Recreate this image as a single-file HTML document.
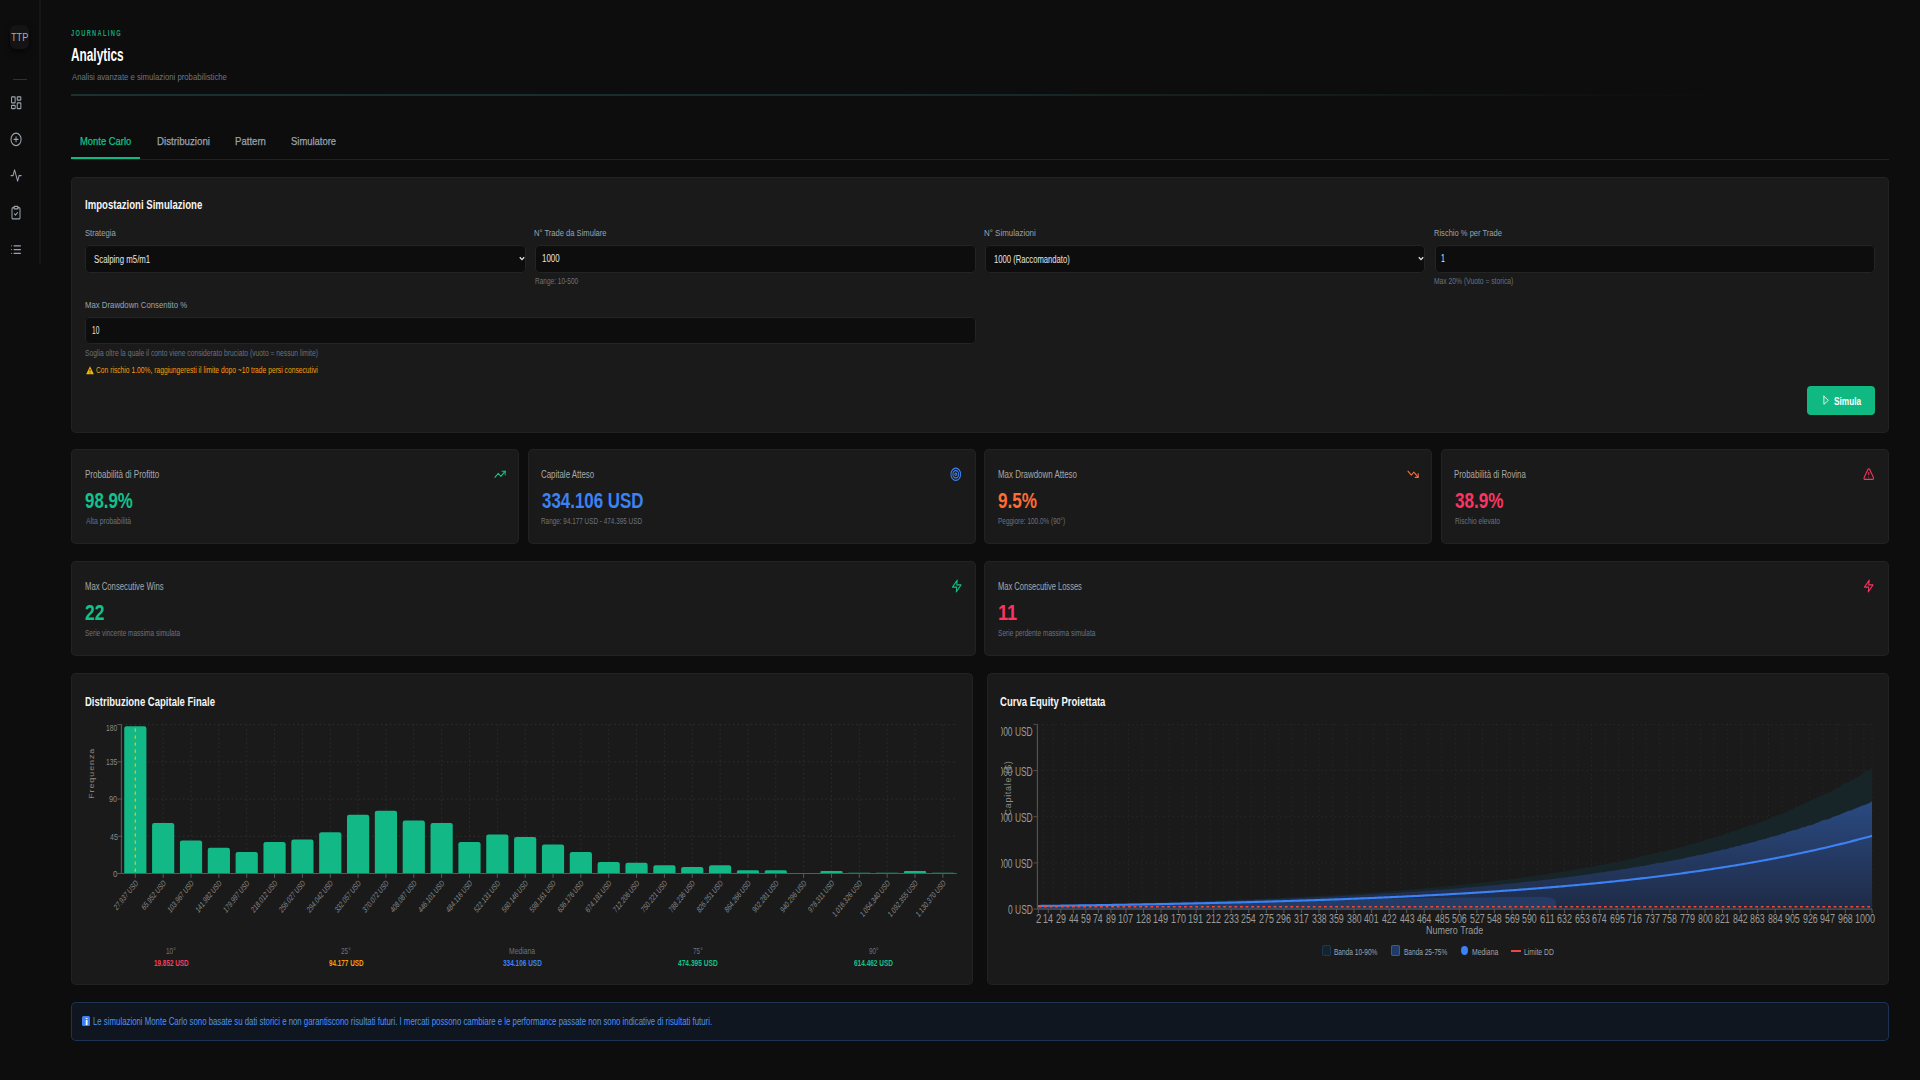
<!DOCTYPE html><html lang="it"><head><meta charset="utf-8"><title>Analytics</title><style>
*{box-sizing:border-box}
html,body{margin:0;padding:0;background:#0d0d0d;width:1920px;height:1080px;overflow:hidden}
body{position:relative;font-family:"Liberation Sans",sans-serif}
.t{position:absolute;white-space:nowrap;transform-origin:0 0;line-height:normal;font-family:"Liberation Sans",sans-serif}
.b{position:absolute}
.i{position:absolute;overflow:visible}
svg text{font-family:"Liberation Sans",sans-serif}

</style></head><body>
<div class="b" style="left:39px;top:0px;width:2px;height:263.5px;background:#151717;border-radius:0 0 1px 1px"></div>
<div class="b" style="left:10px;top:25px;width:19px;height:24px;background:#141414;border-radius:6px;box-shadow:0 3px 6px rgba(0,0,0,.6)"></div>
<div class="t" style="left:10.92px;top:29.9px;font-size:11.8px;color:#a9a9a9;transform:scaleX(0.7798)">TTP</div>
<div class="b" style="left:13px;top:78.8px;width:13.5px;height:1.4px;background:#1c3a3a"></div>
<svg class="i" style="left:9.7px;top:94.55px" width="12.4" height="15.6" viewBox="0 0 24 24" preserveAspectRatio="none" fill="none" stroke="#9ca3af" stroke-width="2" stroke-linecap="round" stroke-linejoin="round"><rect width="7" height="9" x="3" y="3" rx="1"/><rect width="7" height="5" x="14" y="3" rx="1"/><rect width="7" height="9" x="14" y="12" rx="1"/><rect width="7" height="5" x="3" y="16" rx="1"/></svg>
<svg class="i" style="left:9.5px;top:131.9px" width="12.1" height="14.8" viewBox="0 0 24 24" preserveAspectRatio="none" fill="none" stroke="#9ca3af" stroke-width="2" stroke-linecap="round" stroke-linejoin="round"><circle cx="12" cy="12" r="10"/><path d="M8 12h8M12 8v8"/></svg>
<svg class="i" style="left:9.5px;top:168.3px" width="12.2" height="15" viewBox="0 0 24 24" preserveAspectRatio="none" fill="none" stroke="#9ca3af" stroke-width="2" stroke-linecap="round" stroke-linejoin="round"><path d="M22 12h-4l-3 9L9 3l-3 9H2"/></svg>
<svg class="i" style="left:9.5px;top:205.1px" width="12" height="15.2" viewBox="0 0 24 24" preserveAspectRatio="none" fill="none" stroke="#9ca3af" stroke-width="2" stroke-linecap="round" stroke-linejoin="round"><rect width="8" height="4" x="8" y="2" rx="1" ry="1"/><path d="M16 4h2a2 2 0 0 1 2 2v14a2 2 0 0 1-2 2H6a2 2 0 0 1-2-2V6a2 2 0 0 1 2-2h2"/><path d="m9 14 2 2 4-4"/></svg>
<svg class="i" style="left:9.5px;top:241.9px" width="12" height="15" viewBox="0 0 24 24" preserveAspectRatio="none" fill="none" stroke="#9ca3af" stroke-width="2" stroke-linecap="round" stroke-linejoin="round"><path d="M8 6h13M8 12h13M8 18h13M3 6h.01M3 12h.01M3 18h.01"/></svg>
<div class="t" style="left:71.11px;top:27.5px;font-size:8.6px;color:#12a87a;transform:scaleX(0.6627);font-weight:700;letter-spacing:2px">JOURNALING</div>
<div class="t" style="left:71.1px;top:44.8px;font-size:17.5px;color:#ffffff;transform:scaleX(0.6763);font-weight:700">Analytics</div>
<div class="t" style="left:71.5px;top:70.8px;font-size:9.8px;color:#6b7585;transform:scaleX(0.7900)">Analisi avanzate e simulazioni probabilistiche</div>
<div class="b" style="left:71px;top:94px;width:1650px;height:1.6px;background:linear-gradient(90deg,#1b3030 0%,#192b2b 50%,rgba(26,40,40,0) 100%)"></div>
<div class="b" style="left:71px;top:159px;width:1817.8px;height:1.2px;background:#222222"></div>
<div class="b" style="left:71px;top:157px;width:68.6px;height:2.4px;background:#10b981"></div>
<div class="t" style="left:79.85px;top:134.8px;font-size:11.5px;color:#13c28a;transform:scaleX(0.8181);-webkit-text-stroke:0.25px currentColor">Monte Carlo</div>
<div class="t" style="left:156.72px;top:134.9px;font-size:11.5px;color:#9ca3af;transform:scaleX(0.8466);-webkit-text-stroke:0.25px currentColor">Distribuzioni</div>
<div class="t" style="left:234.93px;top:134.9px;font-size:11.5px;color:#9ca3af;transform:scaleX(0.8343);-webkit-text-stroke:0.25px currentColor">Pattern</div>
<div class="t" style="left:291.08px;top:134.9px;font-size:11.5px;color:#9ca3af;transform:scaleX(0.8205);-webkit-text-stroke:0.25px currentColor">Simulatore</div>
<div class="b" style="left:71.4px;top:177px;width:1817.4px;height:255.5px;background:#1a1a1a;box-shadow:inset 0 0 0 1px #222222;border-radius:5px"></div>
<div class="t" style="left:85.08px;top:197px;font-size:13.2px;color:#f5f5f5;transform:scaleX(0.7276);font-weight:700">Impostazioni Simulazione</div>
<div class="t" style="left:84.95px;top:226.8px;font-size:9.4px;color:#9ca3af;transform:scaleX(0.8194)">Strategia</div>
<div class="t" style="left:534.39px;top:226.8px;font-size:9.4px;color:#9ca3af;transform:scaleX(0.8083)">N° Trade da Simulare</div>
<div class="t" style="left:984.16px;top:226.8px;font-size:9.4px;color:#9ca3af;transform:scaleX(0.8474)">N° Simulazioni</div>
<div class="t" style="left:1433.89px;top:226.8px;font-size:9.4px;color:#9ca3af;transform:scaleX(0.8046)">Rischio % per Trade</div>
<div class="b" style="left:85.3px;top:245.4px;width:440.6px;height:27.2px;background:#0d0d0d;box-shadow:inset 0 0 0 1px #242424;border-radius:5px"></div>
<div class="b" style="left:535px;top:245.4px;width:440.6px;height:27.2px;background:#0d0d0d;box-shadow:inset 0 0 0 1px #242424;border-radius:5px"></div>
<div class="b" style="left:984.8px;top:245.4px;width:440.6px;height:27.2px;background:#0d0d0d;box-shadow:inset 0 0 0 1px #242424;border-radius:5px"></div>
<div class="b" style="left:1434.5px;top:245.4px;width:440.6px;height:27.2px;background:#0d0d0d;box-shadow:inset 0 0 0 1px #242424;border-radius:5px"></div>
<div class="t" style="left:94.45px;top:254.1px;font-size:10px;color:#e5e5e5;transform:scaleX(0.7839)">Scalping m5/m1</div>
<div class="t" style="left:542.11px;top:253.3px;font-size:10px;color:#e5e5e5;transform:scaleX(0.7896)">1000</div>
<div class="t" style="left:993.73px;top:254.1px;font-size:10px;color:#e5e5e5;transform:scaleX(0.7654)">1000 (Raccomandato)</div>
<div class="t" style="left:1441.48px;top:253.3px;font-size:10px;color:#e5e5e5;transform:scaleX(0.6897)">1</div>
<svg class="i" style="left:518.6px;top:256px" width="6" height="5" viewBox="0 0 6 5"><path d="M0.8 1.2 L3 3.6 L5.2 1.2" fill="none" stroke="#e5e5e5" stroke-width="1.3"/></svg>
<svg class="i" style="left:1418px;top:256px" width="6" height="5" viewBox="0 0 6 5"><path d="M0.8 1.2 L3 3.6 L5.2 1.2" fill="none" stroke="#e5e5e5" stroke-width="1.3"/></svg>
<div class="t" style="left:534.78px;top:275.5px;font-size:8.6px;color:#6b7280;transform:scaleX(0.7585)">Range: 10-500</div>
<div class="t" style="left:1434.06px;top:275.5px;font-size:8.6px;color:#6b7280;transform:scaleX(0.7835)">Max 20% (Vuoto = storica)</div>
<div class="t" style="left:84.88px;top:298.9px;font-size:9.4px;color:#9ca3af;transform:scaleX(0.8303)">Max Drawdown Consentito %</div>
<div class="b" style="left:85.3px;top:317.2px;width:890.5px;height:26.8px;background:#0d0d0d;box-shadow:inset 0 0 0 1px #242424;border-radius:5px"></div>
<div class="t" style="left:92.41px;top:325.2px;font-size:10px;color:#e5e5e5;transform:scaleX(0.6600)">10</div>
<div class="t" style="left:85.2px;top:347.8px;font-size:8.6px;color:#6b7280;transform:scaleX(0.7845)">Soglia oltre la quale il conto viene considerato bruciato (vuoto = nessun limite)</div>
<svg class="i" style="left:85.8px;top:366.2px" width="8" height="8.6" viewBox="0 0 24 24" preserveAspectRatio="none"><path d="M12 1 L23.5 23 H0.5 Z" fill="#f5b50b"/><path d="M12 9v6M12 18.5v1.5" stroke="#3a2a00" stroke-width="3"/></svg>
<div class="t" style="left:95.96px;top:364.3px;font-size:9.4px;color:#f59e0b;transform:scaleX(0.7159)">Con rischio 1.00%, raggiungeresti il limite dopo ~10 trade persi consecutivi</div>
<div class="b" style="left:1807px;top:386.3px;width:68px;height:28.7px;background:#10b981;border-radius:4px"></div>
<svg class="i" style="left:1821.6px;top:395.4px" width="7.6" height="10.6" viewBox="0 0 24 24" preserveAspectRatio="none" fill="none" stroke="#ffffff" stroke-width="2.2" stroke-linecap="round" stroke-linejoin="round"><polygon points="6 3 20 12 6 21 6 3"/></svg>
<div class="t" style="left:1833.79px;top:395.6px;font-size:10.2px;color:#ffffff;transform:scaleX(0.8107);font-weight:700">Simula</div>
<div class="b" style="left:71.4px;top:449.3px;width:447.8px;height:95.1px;background:#1a1a1a;box-shadow:inset 0 0 0 1px #222222;border-radius:5px"></div>
<div class="b" style="left:527.9px;top:449.3px;width:447.8px;height:95.1px;background:#1a1a1a;box-shadow:inset 0 0 0 1px #222222;border-radius:5px"></div>
<div class="b" style="left:984.4px;top:449.3px;width:447.8px;height:95.1px;background:#1a1a1a;box-shadow:inset 0 0 0 1px #222222;border-radius:5px"></div>
<div class="b" style="left:1441px;top:449.3px;width:447.8px;height:95.1px;background:#1a1a1a;box-shadow:inset 0 0 0 1px #222222;border-radius:5px"></div>
<div class="b" style="left:71.4px;top:561px;width:904.3px;height:94.6px;background:#1a1a1a;box-shadow:inset 0 0 0 1px #222222;border-radius:5px"></div>
<div class="b" style="left:984.4px;top:561px;width:904.4px;height:94.6px;background:#1a1a1a;box-shadow:inset 0 0 0 1px #222222;border-radius:5px"></div>
<div class="t" style="left:85.06px;top:468.8px;font-size:10px;color:#a8a8a8;transform:scaleX(0.8051)">Probabilità di Profitto</div>
<div class="t" style="left:85.39px;top:489.1px;font-size:21.3px;color:#13c28a;transform:scaleX(0.7920);font-weight:700">98.9%</div>
<div class="t" style="left:85.5px;top:516.4px;font-size:9px;color:#6b7280;transform:scaleX(0.7586)">Alta probabilità</div>
<svg class="i" style="left:493.75px;top:467.25px" width="12.2" height="14.5" viewBox="0 0 24 24" preserveAspectRatio="none" fill="none" stroke="#13c28a" stroke-width="2" stroke-linecap="round" stroke-linejoin="round"><polyline points="22 7 13.5 15.5 8.5 10.5 2 17"/><polyline points="16 7 22 7 22 13"/></svg>
<div class="t" style="left:541.4px;top:468.8px;font-size:10px;color:#a8a8a8;transform:scaleX(0.7913)">Capitale Atteso</div>
<div class="t" style="left:541.56px;top:489.1px;font-size:21.3px;color:#3b82f6;transform:scaleX(0.7944);font-weight:700">334.106 USD</div>
<div class="t" style="left:541.29px;top:516.4px;font-size:9px;color:#6b7280;transform:scaleX(0.7085)">Range: 94.177 USD - 474.395 USD</div>
<svg class="i" style="left:950.45px;top:466.9px" width="11.6" height="14.6" viewBox="0 0 24 24" preserveAspectRatio="none" fill="none" stroke="#3b82f6" stroke-width="2" stroke-linecap="round" stroke-linejoin="round"><circle cx="12" cy="12" r="10"/><circle cx="12" cy="12" r="6"/><circle cx="12" cy="12" r="2"/></svg>
<div class="t" style="left:998.17px;top:468.8px;font-size:10px;color:#a8a8a8;transform:scaleX(0.7935)">Max Drawdown Atteso</div>
<div class="t" style="left:998.39px;top:489.1px;font-size:21.3px;color:#ff6b35;transform:scaleX(0.8039);font-weight:700">9.5%</div>
<div class="t" style="left:998.28px;top:516.4px;font-size:9px;color:#6b7280;transform:scaleX(0.7162)">Peggiore: 100.0% (90°)</div>
<svg class="i" style="left:1406.5px;top:467.15px" width="12.2" height="14.5" viewBox="0 0 24 24" preserveAspectRatio="none" fill="none" stroke="#ff6b35" stroke-width="2" stroke-linecap="round" stroke-linejoin="round"><polyline points="22 17 13.5 8.5 8.5 13.5 2 7"/><polyline points="16 17 22 17 22 11"/></svg>
<div class="t" style="left:1454.47px;top:468.8px;font-size:10px;color:#a8a8a8;transform:scaleX(0.7828)">Probabilità di Rovina</div>
<div class="t" style="left:1454.86px;top:489.1px;font-size:21.3px;color:#fb3461;transform:scaleX(0.8043);font-weight:700">38.9%</div>
<div class="t" style="left:1454.57px;top:516.4px;font-size:9px;color:#6b7280;transform:scaleX(0.7374)">Rischio elevato</div>
<svg class="i" style="left:1863.3px;top:467.3px" width="11.6" height="14.2" viewBox="0 0 24 24" preserveAspectRatio="none" fill="none" stroke="#fb3461" stroke-width="2" stroke-linecap="round" stroke-linejoin="round"><path d="m21.73 18-8-14a2 2 0 0 0-3.48 0l-8 14A2 2 0 0 0 4 21h16a2 2 0 0 0 1.73-3Z"/><path d="M12 9v4M12 17h.01"/></svg>
<div class="t" style="left:84.88px;top:580.6px;font-size:10px;color:#a8a8a8;transform:scaleX(0.7727)">Max Consecutive Wins</div>
<div class="t" style="left:85.37px;top:601.2px;font-size:21.3px;color:#13c28a;transform:scaleX(0.8222);font-weight:700">22</div>
<div class="t" style="left:85.21px;top:628.1px;font-size:9px;color:#6b7280;transform:scaleX(0.7235)">Serie vincente massima simulata</div>
<svg class="i" style="left:950.5px;top:578.75px" width="11.5" height="14" viewBox="0 0 24 24" preserveAspectRatio="none" fill="none" stroke="#13c28a" stroke-width="2" stroke-linecap="round" stroke-linejoin="round"><polygon points="13 2 3 14 12 14 11 22 21 10 12 10 13 2"/></svg>
<div class="t" style="left:997.7px;top:580.6px;font-size:10px;color:#a8a8a8;transform:scaleX(0.7545)">Max Consecutive Losses</div>
<div class="t" style="left:997.81px;top:601.2px;font-size:21.3px;color:#fb3461;transform:scaleX(0.8518);font-weight:700">11</div>
<div class="t" style="left:998px;top:628.1px;font-size:9px;color:#6b7280;transform:scaleX(0.7297)">Serie perdente massima simulata</div>
<svg class="i" style="left:1863.35px;top:579px" width="11.5" height="14" viewBox="0 0 24 24" preserveAspectRatio="none" fill="none" stroke="#fb3461" stroke-width="2" stroke-linecap="round" stroke-linejoin="round"><polygon points="13 2 3 14 12 14 11 22 21 10 12 10 13 2"/></svg>
<div class="b" style="left:71.3px;top:673px;width:901.5px;height:311.6px;background:#1a1a1a;box-shadow:inset 0 0 0 1px #222222;border-radius:5px"></div>
<div class="t" style="left:85.18px;top:693.6px;font-size:13.2px;color:#f5f5f5;transform:scaleX(0.7210);font-weight:700">Distribuzione Capitale Finale</div>
<div class="t" style="left:112.92px;top:868.9px;font-size:9.3px;color:#8a8a8a;transform:scaleX(0.8646)">0</div>
<div class="t" style="left:109.56px;top:831.67px;font-size:9.3px;color:#8a8a8a;transform:scaleX(0.7578)">45</div>
<div class="t" style="left:109.38px;top:794.45px;font-size:9.3px;color:#8a8a8a;transform:scaleX(0.7725)">90</div>
<div class="t" style="left:106.2px;top:757.23px;font-size:9.3px;color:#8a8a8a;transform:scaleX(0.7215)">135</div>
<div class="t" style="left:106.2px;top:722.9px;font-size:9.3px;color:#8a8a8a;transform:scaleX(0.7192)">180</div>
<div class="t" style="left:166.36px;top:946px;font-size:8.6px;color:#6b7280;transform:scaleX(0.7526)">10°</div>
<div class="t" style="left:153.87px;top:956.8px;font-size:9.8px;color:#f43f5e;transform:scaleX(0.6504);font-weight:700">19.852 USD</div>
<div class="t" style="left:341.48px;top:946px;font-size:8.6px;color:#6b7280;transform:scaleX(0.7475)">25°</div>
<div class="t" style="left:329.06px;top:956.8px;font-size:9.8px;color:#f59e0b;transform:scaleX(0.6468);font-weight:700">94.177 USD</div>
<div class="t" style="left:508.91px;top:946px;font-size:8.6px;color:#6b7280;transform:scaleX(0.7886)">Mediana</div>
<div class="t" style="left:502.82px;top:956.8px;font-size:9.8px;color:#3b82f6;transform:scaleX(0.6608);font-weight:700">334.106 USD</div>
<div class="t" style="left:693.18px;top:946px;font-size:8.6px;color:#6b7280;transform:scaleX(0.7475)">75°</div>
<div class="t" style="left:678.2px;top:956.8px;font-size:9.8px;color:#13c28a;transform:scaleX(0.6757);font-weight:700">474.395 USD</div>
<div class="t" style="left:868.91px;top:946px;font-size:8.6px;color:#6b7280;transform:scaleX(0.7448)">90°</div>
<div class="t" style="left:854.22px;top:956.8px;font-size:9.8px;color:#13c28a;transform:scaleX(0.6625);font-weight:700">614.462 USD</div>
<div class="b" style="left:987.4px;top:673px;width:901.4px;height:311.6px;background:#1a1a1a;box-shadow:inset 0 0 0 1px #222222;border-radius:5px"></div>
<div class="t" style="left:1000.32px;top:693.6px;font-size:13.2px;color:#f5f5f5;transform:scaleX(0.7229);font-weight:700">Curva Equity Proiettata</div>
<div class="t" style="left:1035.56px;top:911.7px;font-size:12px;color:#9a9a9a;transform:scaleX(0.7971)">2</div>
<div class="t" style="left:1043.09px;top:911.7px;font-size:12px;color:#9a9a9a;transform:scaleX(0.7426)">14</div>
<div class="t" style="left:1055.85px;top:911.7px;font-size:12px;color:#9a9a9a;transform:scaleX(0.7389)">29</div>
<div class="t" style="left:1068.66px;top:911.7px;font-size:12px;color:#9a9a9a;transform:scaleX(0.7042)">44</div>
<div class="t" style="left:1081.01px;top:911.7px;font-size:12px;color:#9a9a9a;transform:scaleX(0.7317)">59</div>
<div class="t" style="left:1093.46px;top:911.7px;font-size:12px;color:#9a9a9a;transform:scaleX(0.7246)">74</div>
<div class="t" style="left:1106.07px;top:911.7px;font-size:12px;color:#9a9a9a;transform:scaleX(0.7317)">89</div>
<div class="t" style="left:1118.28px;top:911.7px;font-size:12px;color:#9a9a9a;transform:scaleX(0.7551)">107</div>
<div class="t" style="left:1135.83px;top:911.7px;font-size:12px;color:#9a9a9a;transform:scaleX(0.7527)">128</div>
<div class="t" style="left:1153.37px;top:911.7px;font-size:12px;color:#9a9a9a;transform:scaleX(0.7551)">149</div>
<div class="t" style="left:1170.92px;top:911.7px;font-size:12px;color:#9a9a9a;transform:scaleX(0.7503)">170</div>
<div class="t" style="left:1188.47px;top:911.7px;font-size:12px;color:#9a9a9a;transform:scaleX(0.7551)">191</div>
<div class="t" style="left:1206.24px;top:911.7px;font-size:12px;color:#9a9a9a;transform:scaleX(0.7431)">212</div>
<div class="t" style="left:1223.79px;top:911.7px;font-size:12px;color:#9a9a9a;transform:scaleX(0.7407)">233</div>
<div class="t" style="left:1241.34px;top:911.7px;font-size:12px;color:#9a9a9a;transform:scaleX(0.7338)">254</div>
<div class="t" style="left:1258.88px;top:911.7px;font-size:12px;color:#9a9a9a;transform:scaleX(0.7407)">275</div>
<div class="t" style="left:1276.43px;top:911.7px;font-size:12px;color:#9a9a9a;transform:scaleX(0.7407)">296</div>
<div class="t" style="left:1294.11px;top:911.7px;font-size:12px;color:#9a9a9a;transform:scaleX(0.7361)">317</div>
<div class="t" style="left:1311.66px;top:911.7px;font-size:12px;color:#9a9a9a;transform:scaleX(0.7338)">338</div>
<div class="t" style="left:1329.2px;top:911.7px;font-size:12px;color:#9a9a9a;transform:scaleX(0.7361)">359</div>
<div class="t" style="left:1346.75px;top:911.7px;font-size:12px;color:#9a9a9a;transform:scaleX(0.7315)">380</div>
<div class="t" style="left:1364.43px;top:911.7px;font-size:12px;color:#9a9a9a;transform:scaleX(0.7292)">401</div>
<div class="t" style="left:1381.97px;top:911.7px;font-size:12px;color:#9a9a9a;transform:scaleX(0.7292)">422</div>
<div class="t" style="left:1399.52px;top:911.7px;font-size:12px;color:#9a9a9a;transform:scaleX(0.7269)">443</div>
<div class="t" style="left:1417.06px;top:911.7px;font-size:12px;color:#9a9a9a;transform:scaleX(0.7202)">464</div>
<div class="t" style="left:1434.61px;top:911.7px;font-size:12px;color:#9a9a9a;transform:scaleX(0.7269)">485</div>
<div class="t" style="left:1451.97px;top:911.7px;font-size:12px;color:#9a9a9a;transform:scaleX(0.7361)">506</div>
<div class="t" style="left:1469.52px;top:911.7px;font-size:12px;color:#9a9a9a;transform:scaleX(0.7384)">527</div>
<div class="t" style="left:1487.07px;top:911.7px;font-size:12px;color:#9a9a9a;transform:scaleX(0.7361)">548</div>
<div class="t" style="left:1504.61px;top:911.7px;font-size:12px;color:#9a9a9a;transform:scaleX(0.7384)">569</div>
<div class="t" style="left:1522.16px;top:911.7px;font-size:12px;color:#9a9a9a;transform:scaleX(0.7338)">590</div>
<div class="t" style="left:1539.59px;top:911.7px;font-size:12px;color:#9a9a9a;transform:scaleX(0.7778)">611</div>
<div class="t" style="left:1557.15px;top:911.7px;font-size:12px;color:#9a9a9a;transform:scaleX(0.7431)">632</div>
<div class="t" style="left:1574.7px;top:911.7px;font-size:12px;color:#9a9a9a;transform:scaleX(0.7407)">653</div>
<div class="t" style="left:1592.25px;top:911.7px;font-size:12px;color:#9a9a9a;transform:scaleX(0.7338)">674</div>
<div class="t" style="left:1609.79px;top:911.7px;font-size:12px;color:#9a9a9a;transform:scaleX(0.7407)">695</div>
<div class="t" style="left:1627.34px;top:911.7px;font-size:12px;color:#9a9a9a;transform:scaleX(0.7407)">716</div>
<div class="t" style="left:1644.88px;top:911.7px;font-size:12px;color:#9a9a9a;transform:scaleX(0.7431)">737</div>
<div class="t" style="left:1662.43px;top:911.7px;font-size:12px;color:#9a9a9a;transform:scaleX(0.7407)">758</div>
<div class="t" style="left:1679.97px;top:911.7px;font-size:12px;color:#9a9a9a;transform:scaleX(0.7431)">779</div>
<div class="t" style="left:1697.61px;top:911.7px;font-size:12px;color:#9a9a9a;transform:scaleX(0.7338)">800</div>
<div class="t" style="left:1715.16px;top:911.7px;font-size:12px;color:#9a9a9a;transform:scaleX(0.7384)">821</div>
<div class="t" style="left:1732.7px;top:911.7px;font-size:12px;color:#9a9a9a;transform:scaleX(0.7384)">842</div>
<div class="t" style="left:1750.25px;top:911.7px;font-size:12px;color:#9a9a9a;transform:scaleX(0.7361)">863</div>
<div class="t" style="left:1767.8px;top:911.7px;font-size:12px;color:#9a9a9a;transform:scaleX(0.7292)">884</div>
<div class="t" style="left:1785.29px;top:911.7px;font-size:12px;color:#9a9a9a;transform:scaleX(0.7384)">905</div>
<div class="t" style="left:1802.84px;top:911.7px;font-size:12px;color:#9a9a9a;transform:scaleX(0.7384)">926</div>
<div class="t" style="left:1820.38px;top:911.7px;font-size:12px;color:#9a9a9a;transform:scaleX(0.7407)">947</div>
<div class="t" style="left:1837.93px;top:911.7px;font-size:12px;color:#9a9a9a;transform:scaleX(0.7384)">968</div>
<div class="t" style="left:1855.02px;top:911.7px;font-size:12px;color:#9a9a9a;transform:scaleX(0.7526)">1000</div>
<div class="t" style="left:1425.73px;top:923.5px;font-size:10.5px;color:#9a9a9a;transform:scaleX(0.8521)">Numero Trade</div>
<div class="b" style="left:1000.6px;top:720px;width:40px;height:200px;overflow:hidden">
<div class="t" style="left:7px;top:183.1px;font-size:12px;color:#9a9a9a;transform:scaleX(0.7039)">0 USD</div>
<div class="t" style="left:-18.8px;top:136.92px;font-size:12px;color:#9a9a9a;transform:scaleX(0.7039)">200.000 USD</div>
<div class="t" style="left:-18.8px;top:90.75px;font-size:12px;color:#9a9a9a;transform:scaleX(0.7039)">400.000 USD</div>
<div class="t" style="left:-18.8px;top:44.58px;font-size:12px;color:#9a9a9a;transform:scaleX(0.7039)">600.000 USD</div>
<div class="t" style="left:-18.8px;top:4.6px;font-size:12px;color:#9a9a9a;transform:scaleX(0.7039)">800.000 USD</div>
</div>
<div class="b" style="left:1321.9px;top:945px;width:8.7px;height:11.3px;background:#15242a;box-shadow:inset 0 0 0 1px #1d3556;border-radius:2px"></div>
<div class="t" style="left:1334.47px;top:945.5px;font-size:9.4px;color:#9ca3af;transform:scaleX(0.6989)">Banda 10-90%</div>
<div class="b" style="left:1391.2px;top:945px;width:9.3px;height:11.3px;background:#1f3a66;box-shadow:inset 0 0 0 1px #2d5cad;border-radius:2px"></div>
<div class="t" style="left:1404.28px;top:945.5px;font-size:9.4px;color:#9ca3af;transform:scaleX(0.6972)">Banda 25-75%</div>
<div class="b" style="left:1461px;top:946.4px;width:7.2px;height:9.1px;background:#3b82f6;border-radius:50%"></div>
<div class="t" style="left:1471.65px;top:945.5px;font-size:9.4px;color:#9ca3af;transform:scaleX(0.7300)">Mediana</div>
<div class="b" style="left:1511px;top:950px;width:9.6px;height:1.8px;background:#ef4444"></div>
<div class="t" style="left:1524.05px;top:945.5px;font-size:9.4px;color:#9ca3af;transform:scaleX(0.7258)">Limite DD</div>
<div class="b" style="left:71.3px;top:1001.9px;width:1817.5px;height:38.7px;background:#0f1620;box-shadow:inset 0 0 0 1px #1c3354;border-radius:5px"></div>
<div class="b" style="left:82.2px;top:1015.8px;width:7.7px;height:10.6px;background:#3b82f6;border-radius:1.5px"></div>
<div class="t" style="left:84.53px;top:1016.6px;font-size:9px;color:#ffffff;transform:scaleX(1.2261);font-weight:700">i</div>
<div class="t" style="left:93.27px;top:1015.9px;font-size:10px;color:#4f92f0;transform:scaleX(0.7822)">Le simulazioni Monte Carlo sono basate su dati storici e non garantiscono risultati futuri. I mercati possono cambiare e le performance passate non sono indicative di risultati futuri.</div>
<svg class="i" style="left:0;top:0;pointer-events:none" width="1920" height="1080" viewBox="0 0 1920 1080">
<line x1="121.4" y1="836.27" x2="956.8" y2="836.27" stroke="#2f2f2f" stroke-width="1" stroke-dasharray="1.6 2.8"/>
<line x1="121.4" y1="799.05" x2="956.8" y2="799.05" stroke="#2f2f2f" stroke-width="1" stroke-dasharray="1.6 2.8"/>
<line x1="121.4" y1="761.83" x2="956.8" y2="761.83" stroke="#2f2f2f" stroke-width="1" stroke-dasharray="1.6 2.8"/>
<line x1="121.4" y1="724.6" x2="956.8" y2="724.6" stroke="#2f2f2f" stroke-width="1" stroke-dasharray="1.6 2.8"/>
<line x1="135.32" y1="724.6" x2="135.32" y2="873.5" stroke="#2f2f2f" stroke-width="0.9" stroke-dasharray="1.6 2.8"/>
<line x1="163.17" y1="724.6" x2="163.17" y2="873.5" stroke="#2f2f2f" stroke-width="0.9" stroke-dasharray="1.6 2.8"/>
<line x1="191.02" y1="724.6" x2="191.02" y2="873.5" stroke="#2f2f2f" stroke-width="0.9" stroke-dasharray="1.6 2.8"/>
<line x1="218.86" y1="724.6" x2="218.86" y2="873.5" stroke="#2f2f2f" stroke-width="0.9" stroke-dasharray="1.6 2.8"/>
<line x1="246.71" y1="724.6" x2="246.71" y2="873.5" stroke="#2f2f2f" stroke-width="0.9" stroke-dasharray="1.6 2.8"/>
<line x1="274.56" y1="724.6" x2="274.56" y2="873.5" stroke="#2f2f2f" stroke-width="0.9" stroke-dasharray="1.6 2.8"/>
<line x1="302.4" y1="724.6" x2="302.4" y2="873.5" stroke="#2f2f2f" stroke-width="0.9" stroke-dasharray="1.6 2.8"/>
<line x1="330.25" y1="724.6" x2="330.25" y2="873.5" stroke="#2f2f2f" stroke-width="0.9" stroke-dasharray="1.6 2.8"/>
<line x1="358.1" y1="724.6" x2="358.1" y2="873.5" stroke="#2f2f2f" stroke-width="0.9" stroke-dasharray="1.6 2.8"/>
<line x1="385.94" y1="724.6" x2="385.94" y2="873.5" stroke="#2f2f2f" stroke-width="0.9" stroke-dasharray="1.6 2.8"/>
<line x1="413.79" y1="724.6" x2="413.79" y2="873.5" stroke="#2f2f2f" stroke-width="0.9" stroke-dasharray="1.6 2.8"/>
<line x1="441.64" y1="724.6" x2="441.64" y2="873.5" stroke="#2f2f2f" stroke-width="0.9" stroke-dasharray="1.6 2.8"/>
<line x1="469.48" y1="724.6" x2="469.48" y2="873.5" stroke="#2f2f2f" stroke-width="0.9" stroke-dasharray="1.6 2.8"/>
<line x1="497.33" y1="724.6" x2="497.33" y2="873.5" stroke="#2f2f2f" stroke-width="0.9" stroke-dasharray="1.6 2.8"/>
<line x1="525.18" y1="724.6" x2="525.18" y2="873.5" stroke="#2f2f2f" stroke-width="0.9" stroke-dasharray="1.6 2.8"/>
<line x1="553.02" y1="724.6" x2="553.02" y2="873.5" stroke="#2f2f2f" stroke-width="0.9" stroke-dasharray="1.6 2.8"/>
<line x1="580.87" y1="724.6" x2="580.87" y2="873.5" stroke="#2f2f2f" stroke-width="0.9" stroke-dasharray="1.6 2.8"/>
<line x1="608.72" y1="724.6" x2="608.72" y2="873.5" stroke="#2f2f2f" stroke-width="0.9" stroke-dasharray="1.6 2.8"/>
<line x1="636.56" y1="724.6" x2="636.56" y2="873.5" stroke="#2f2f2f" stroke-width="0.9" stroke-dasharray="1.6 2.8"/>
<line x1="664.41" y1="724.6" x2="664.41" y2="873.5" stroke="#2f2f2f" stroke-width="0.9" stroke-dasharray="1.6 2.8"/>
<line x1="692.26" y1="724.6" x2="692.26" y2="873.5" stroke="#2f2f2f" stroke-width="0.9" stroke-dasharray="1.6 2.8"/>
<line x1="720.1" y1="724.6" x2="720.1" y2="873.5" stroke="#2f2f2f" stroke-width="0.9" stroke-dasharray="1.6 2.8"/>
<line x1="747.95" y1="724.6" x2="747.95" y2="873.5" stroke="#2f2f2f" stroke-width="0.9" stroke-dasharray="1.6 2.8"/>
<line x1="775.8" y1="724.6" x2="775.8" y2="873.5" stroke="#2f2f2f" stroke-width="0.9" stroke-dasharray="1.6 2.8"/>
<line x1="803.64" y1="724.6" x2="803.64" y2="873.5" stroke="#2f2f2f" stroke-width="0.9" stroke-dasharray="1.6 2.8"/>
<line x1="831.49" y1="724.6" x2="831.49" y2="873.5" stroke="#2f2f2f" stroke-width="0.9" stroke-dasharray="1.6 2.8"/>
<line x1="859.34" y1="724.6" x2="859.34" y2="873.5" stroke="#2f2f2f" stroke-width="0.9" stroke-dasharray="1.6 2.8"/>
<line x1="887.18" y1="724.6" x2="887.18" y2="873.5" stroke="#2f2f2f" stroke-width="0.9" stroke-dasharray="1.6 2.8"/>
<line x1="915.03" y1="724.6" x2="915.03" y2="873.5" stroke="#2f2f2f" stroke-width="0.9" stroke-dasharray="1.6 2.8"/>
<line x1="942.88" y1="724.6" x2="942.88" y2="873.5" stroke="#2f2f2f" stroke-width="0.9" stroke-dasharray="1.6 2.8"/>
<path d="M124.22 873.5 v-145.05 a2.2 2.2 0 0 1 2.2 -2.2 h17.8 a2.2 2.2 0 0 1 2.2 2.2 v145.05 z" fill="#12b886"/>
<path d="M152.07 873.5 v-48.26 a2.2 2.2 0 0 1 2.2 -2.2 h17.8 a2.2 2.2 0 0 1 2.2 2.2 v48.26 z" fill="#12b886"/>
<path d="M179.92 873.5 v-30.89 a2.2 2.2 0 0 1 2.2 -2.2 h17.8 a2.2 2.2 0 0 1 2.2 2.2 v30.89 z" fill="#12b886"/>
<path d="M207.76 873.5 v-23.44 a2.2 2.2 0 0 1 2.2 -2.2 h17.8 a2.2 2.2 0 0 1 2.2 2.2 v23.44 z" fill="#12b886"/>
<path d="M235.61 873.5 v-19.31 a2.2 2.2 0 0 1 2.2 -2.2 h17.8 a2.2 2.2 0 0 1 2.2 2.2 v19.31 z" fill="#12b886"/>
<path d="M263.46 873.5 v-29.23 a2.2 2.2 0 0 1 2.2 -2.2 h17.8 a2.2 2.2 0 0 1 2.2 2.2 v29.23 z" fill="#12b886"/>
<path d="M291.3 873.5 v-31.72 a2.2 2.2 0 0 1 2.2 -2.2 h17.8 a2.2 2.2 0 0 1 2.2 2.2 v31.72 z" fill="#12b886"/>
<path d="M319.15 873.5 v-39.16 a2.2 2.2 0 0 1 2.2 -2.2 h17.8 a2.2 2.2 0 0 1 2.2 2.2 v39.16 z" fill="#12b886"/>
<path d="M347 873.5 v-56.53 a2.2 2.2 0 0 1 2.2 -2.2 h17.8 a2.2 2.2 0 0 1 2.2 2.2 v56.53 z" fill="#12b886"/>
<path d="M374.84 873.5 v-60.67 a2.2 2.2 0 0 1 2.2 -2.2 h17.8 a2.2 2.2 0 0 1 2.2 2.2 v60.67 z" fill="#12b886"/>
<path d="M402.69 873.5 v-50.74 a2.2 2.2 0 0 1 2.2 -2.2 h17.8 a2.2 2.2 0 0 1 2.2 2.2 v50.74 z" fill="#12b886"/>
<path d="M430.54 873.5 v-48.26 a2.2 2.2 0 0 1 2.2 -2.2 h17.8 a2.2 2.2 0 0 1 2.2 2.2 v48.26 z" fill="#12b886"/>
<path d="M458.38 873.5 v-29.23 a2.2 2.2 0 0 1 2.2 -2.2 h17.8 a2.2 2.2 0 0 1 2.2 2.2 v29.23 z" fill="#12b886"/>
<path d="M486.23 873.5 v-36.68 a2.2 2.2 0 0 1 2.2 -2.2 h17.8 a2.2 2.2 0 0 1 2.2 2.2 v36.68 z" fill="#12b886"/>
<path d="M514.08 873.5 v-34.2 a2.2 2.2 0 0 1 2.2 -2.2 h17.8 a2.2 2.2 0 0 1 2.2 2.2 v34.2 z" fill="#12b886"/>
<path d="M541.92 873.5 v-26.75 a2.2 2.2 0 0 1 2.2 -2.2 h17.8 a2.2 2.2 0 0 1 2.2 2.2 v26.75 z" fill="#12b886"/>
<path d="M569.77 873.5 v-19.31 a2.2 2.2 0 0 1 2.2 -2.2 h17.8 a2.2 2.2 0 0 1 2.2 2.2 v19.31 z" fill="#12b886"/>
<path d="M597.62 873.5 v-9.38 a2.2 2.2 0 0 1 2.2 -2.2 h17.8 a2.2 2.2 0 0 1 2.2 2.2 v9.38 z" fill="#12b886"/>
<path d="M625.46 873.5 v-8.55 a2.2 2.2 0 0 1 2.2 -2.2 h17.8 a2.2 2.2 0 0 1 2.2 2.2 v8.55 z" fill="#12b886"/>
<path d="M653.31 873.5 v-6.07 a2.2 2.2 0 0 1 2.2 -2.2 h17.8 a2.2 2.2 0 0 1 2.2 2.2 v6.07 z" fill="#12b886"/>
<path d="M681.16 873.5 v-4.42 a2.2 2.2 0 0 1 2.2 -2.2 h17.8 a2.2 2.2 0 0 1 2.2 2.2 v4.42 z" fill="#12b886"/>
<path d="M709 873.5 v-6.07 a2.2 2.2 0 0 1 2.2 -2.2 h17.8 a2.2 2.2 0 0 1 2.2 2.2 v6.07 z" fill="#12b886"/>
<path d="M736.85 873.5 v-1.65 a1.65 1.65 0 0 1 1.65 -1.65 h18.89 a1.65 1.65 0 0 1 1.65 1.65 v1.65 z" fill="#12b886"/>
<path d="M764.7 873.5 v-1.65 a1.65 1.65 0 0 1 1.65 -1.65 h18.89 a1.65 1.65 0 0 1 1.65 1.65 v1.65 z" fill="#12b886"/>
<path d="M820.39 873.5 v-1.24 a1.24 1.24 0 0 1 1.24 -1.24 h19.72 a1.24 1.24 0 0 1 1.24 1.24 v1.24 z" fill="#12b886"/>
<path d="M848.24 873.5 v-0.41 a0.41 0.41 0 0 1 0.41 -0.41 h21.37 a0.41 0.41 0 0 1 0.41 0.41 v0.41 z" fill="#12b886"/>
<path d="M876.08 873.5 v-0.41 a0.41 0.41 0 0 1 0.41 -0.41 h21.37 a0.41 0.41 0 0 1 0.41 0.41 v0.41 z" fill="#12b886"/>
<path d="M903.93 873.5 v-1.24 a1.24 1.24 0 0 1 1.24 -1.24 h19.72 a1.24 1.24 0 0 1 1.24 1.24 v1.24 z" fill="#12b886"/>
<path d="M931.78 873.5 v-0.41 a0.41 0.41 0 0 1 0.41 -0.41 h21.37 a0.41 0.41 0 0 1 0.41 0.41 v0.41 z" fill="#12b886"/>
<line x1="121.4" y1="724.6" x2="121.4" y2="873.5" stroke="#5a5a5a" stroke-width="1.1"/>
<line x1="121.4" y1="873.5" x2="956.8" y2="873.5" stroke="#5a5a5a" stroke-width="1.1"/>
<line x1="117.4" y1="873.5" x2="121.4" y2="873.5" stroke="#5a5a5a" stroke-width="1"/>
<line x1="117.4" y1="836.27" x2="121.4" y2="836.27" stroke="#5a5a5a" stroke-width="1"/>
<line x1="117.4" y1="799.05" x2="121.4" y2="799.05" stroke="#5a5a5a" stroke-width="1"/>
<line x1="117.4" y1="761.83" x2="121.4" y2="761.83" stroke="#5a5a5a" stroke-width="1"/>
<line x1="117.4" y1="724.6" x2="121.4" y2="724.6" stroke="#5a5a5a" stroke-width="1"/>
<line x1="135.32" y1="873.5" x2="135.32" y2="877.8" stroke="#5a5a5a" stroke-width="1"/>
<line x1="163.17" y1="873.5" x2="163.17" y2="877.8" stroke="#5a5a5a" stroke-width="1"/>
<line x1="191.02" y1="873.5" x2="191.02" y2="877.8" stroke="#5a5a5a" stroke-width="1"/>
<line x1="218.86" y1="873.5" x2="218.86" y2="877.8" stroke="#5a5a5a" stroke-width="1"/>
<line x1="246.71" y1="873.5" x2="246.71" y2="877.8" stroke="#5a5a5a" stroke-width="1"/>
<line x1="274.56" y1="873.5" x2="274.56" y2="877.8" stroke="#5a5a5a" stroke-width="1"/>
<line x1="302.4" y1="873.5" x2="302.4" y2="877.8" stroke="#5a5a5a" stroke-width="1"/>
<line x1="330.25" y1="873.5" x2="330.25" y2="877.8" stroke="#5a5a5a" stroke-width="1"/>
<line x1="358.1" y1="873.5" x2="358.1" y2="877.8" stroke="#5a5a5a" stroke-width="1"/>
<line x1="385.94" y1="873.5" x2="385.94" y2="877.8" stroke="#5a5a5a" stroke-width="1"/>
<line x1="413.79" y1="873.5" x2="413.79" y2="877.8" stroke="#5a5a5a" stroke-width="1"/>
<line x1="441.64" y1="873.5" x2="441.64" y2="877.8" stroke="#5a5a5a" stroke-width="1"/>
<line x1="469.48" y1="873.5" x2="469.48" y2="877.8" stroke="#5a5a5a" stroke-width="1"/>
<line x1="497.33" y1="873.5" x2="497.33" y2="877.8" stroke="#5a5a5a" stroke-width="1"/>
<line x1="525.18" y1="873.5" x2="525.18" y2="877.8" stroke="#5a5a5a" stroke-width="1"/>
<line x1="553.02" y1="873.5" x2="553.02" y2="877.8" stroke="#5a5a5a" stroke-width="1"/>
<line x1="580.87" y1="873.5" x2="580.87" y2="877.8" stroke="#5a5a5a" stroke-width="1"/>
<line x1="608.72" y1="873.5" x2="608.72" y2="877.8" stroke="#5a5a5a" stroke-width="1"/>
<line x1="636.56" y1="873.5" x2="636.56" y2="877.8" stroke="#5a5a5a" stroke-width="1"/>
<line x1="664.41" y1="873.5" x2="664.41" y2="877.8" stroke="#5a5a5a" stroke-width="1"/>
<line x1="692.26" y1="873.5" x2="692.26" y2="877.8" stroke="#5a5a5a" stroke-width="1"/>
<line x1="720.1" y1="873.5" x2="720.1" y2="877.8" stroke="#5a5a5a" stroke-width="1"/>
<line x1="747.95" y1="873.5" x2="747.95" y2="877.8" stroke="#5a5a5a" stroke-width="1"/>
<line x1="775.8" y1="873.5" x2="775.8" y2="877.8" stroke="#5a5a5a" stroke-width="1"/>
<line x1="803.64" y1="873.5" x2="803.64" y2="877.8" stroke="#5a5a5a" stroke-width="1"/>
<line x1="831.49" y1="873.5" x2="831.49" y2="877.8" stroke="#5a5a5a" stroke-width="1"/>
<line x1="859.34" y1="873.5" x2="859.34" y2="877.8" stroke="#5a5a5a" stroke-width="1"/>
<line x1="887.18" y1="873.5" x2="887.18" y2="877.8" stroke="#5a5a5a" stroke-width="1"/>
<line x1="915.03" y1="873.5" x2="915.03" y2="877.8" stroke="#5a5a5a" stroke-width="1"/>
<line x1="942.88" y1="873.5" x2="942.88" y2="877.8" stroke="#5a5a5a" stroke-width="1"/>
<line x1="135.32" y1="728.5" x2="135.32" y2="873.5" stroke="#f5b800" stroke-width="1.3" stroke-dasharray="3.2 3.8"/>
<text transform="translate(93.8 773.3) scale(0.8 1) rotate(-90)" text-anchor="middle" font-size="10" fill="#888" letter-spacing="1" textLength="51" lengthAdjust="spacingAndGlyphs">Frequenza</text>
<text transform="translate(138.52 883.6) scale(0.8 1) rotate(-45)" text-anchor="end" font-size="8.9" fill="#8a8a8a" textLength="38.5" lengthAdjust="spacingAndGlyphs">27.937 USD</text>
<text transform="translate(166.37 883.6) scale(0.8 1) rotate(-45)" text-anchor="end" font-size="8.9" fill="#8a8a8a" textLength="38.5" lengthAdjust="spacingAndGlyphs">65.952 USD</text>
<text transform="translate(194.22 883.6) scale(0.8 1) rotate(-45)" text-anchor="end" font-size="8.9" fill="#8a8a8a" textLength="41.8" lengthAdjust="spacingAndGlyphs">103.967 USD</text>
<text transform="translate(222.06 883.6) scale(0.8 1) rotate(-45)" text-anchor="end" font-size="8.9" fill="#8a8a8a" textLength="41.8" lengthAdjust="spacingAndGlyphs">141.982 USD</text>
<text transform="translate(249.91 883.6) scale(0.8 1) rotate(-45)" text-anchor="end" font-size="8.9" fill="#8a8a8a" textLength="41.8" lengthAdjust="spacingAndGlyphs">179.997 USD</text>
<text transform="translate(277.76 883.6) scale(0.8 1) rotate(-45)" text-anchor="end" font-size="8.9" fill="#8a8a8a" textLength="41.8" lengthAdjust="spacingAndGlyphs">218.012 USD</text>
<text transform="translate(305.6 883.6) scale(0.8 1) rotate(-45)" text-anchor="end" font-size="8.9" fill="#8a8a8a" textLength="41.8" lengthAdjust="spacingAndGlyphs">256.027 USD</text>
<text transform="translate(333.45 883.6) scale(0.8 1) rotate(-45)" text-anchor="end" font-size="8.9" fill="#8a8a8a" textLength="41.8" lengthAdjust="spacingAndGlyphs">294.042 USD</text>
<text transform="translate(361.3 883.6) scale(0.8 1) rotate(-45)" text-anchor="end" font-size="8.9" fill="#8a8a8a" textLength="41.8" lengthAdjust="spacingAndGlyphs">332.057 USD</text>
<text transform="translate(389.14 883.6) scale(0.8 1) rotate(-45)" text-anchor="end" font-size="8.9" fill="#8a8a8a" textLength="41.8" lengthAdjust="spacingAndGlyphs">370.072 USD</text>
<text transform="translate(416.99 883.6) scale(0.8 1) rotate(-45)" text-anchor="end" font-size="8.9" fill="#8a8a8a" textLength="41.8" lengthAdjust="spacingAndGlyphs">408.087 USD</text>
<text transform="translate(444.84 883.6) scale(0.8 1) rotate(-45)" text-anchor="end" font-size="8.9" fill="#8a8a8a" textLength="41.8" lengthAdjust="spacingAndGlyphs">446.101 USD</text>
<text transform="translate(472.68 883.6) scale(0.8 1) rotate(-45)" text-anchor="end" font-size="8.9" fill="#8a8a8a" textLength="41.8" lengthAdjust="spacingAndGlyphs">484.116 USD</text>
<text transform="translate(500.53 883.6) scale(0.8 1) rotate(-45)" text-anchor="end" font-size="8.9" fill="#8a8a8a" textLength="41.8" lengthAdjust="spacingAndGlyphs">522.131 USD</text>
<text transform="translate(528.38 883.6) scale(0.8 1) rotate(-45)" text-anchor="end" font-size="8.9" fill="#8a8a8a" textLength="41.8" lengthAdjust="spacingAndGlyphs">560.146 USD</text>
<text transform="translate(556.22 883.6) scale(0.8 1) rotate(-45)" text-anchor="end" font-size="8.9" fill="#8a8a8a" textLength="41.8" lengthAdjust="spacingAndGlyphs">598.161 USD</text>
<text transform="translate(584.07 883.6) scale(0.8 1) rotate(-45)" text-anchor="end" font-size="8.9" fill="#8a8a8a" textLength="41.8" lengthAdjust="spacingAndGlyphs">636.176 USD</text>
<text transform="translate(611.92 883.6) scale(0.8 1) rotate(-45)" text-anchor="end" font-size="8.9" fill="#8a8a8a" textLength="41.8" lengthAdjust="spacingAndGlyphs">674.191 USD</text>
<text transform="translate(639.76 883.6) scale(0.8 1) rotate(-45)" text-anchor="end" font-size="8.9" fill="#8a8a8a" textLength="41.8" lengthAdjust="spacingAndGlyphs">712.206 USD</text>
<text transform="translate(667.61 883.6) scale(0.8 1) rotate(-45)" text-anchor="end" font-size="8.9" fill="#8a8a8a" textLength="41.8" lengthAdjust="spacingAndGlyphs">750.221 USD</text>
<text transform="translate(695.46 883.6) scale(0.8 1) rotate(-45)" text-anchor="end" font-size="8.9" fill="#8a8a8a" textLength="41.8" lengthAdjust="spacingAndGlyphs">788.236 USD</text>
<text transform="translate(723.3 883.6) scale(0.8 1) rotate(-45)" text-anchor="end" font-size="8.9" fill="#8a8a8a" textLength="41.8" lengthAdjust="spacingAndGlyphs">826.251 USD</text>
<text transform="translate(751.15 883.6) scale(0.8 1) rotate(-45)" text-anchor="end" font-size="8.9" fill="#8a8a8a" textLength="41.8" lengthAdjust="spacingAndGlyphs">864.266 USD</text>
<text transform="translate(779 883.6) scale(0.8 1) rotate(-45)" text-anchor="end" font-size="8.9" fill="#8a8a8a" textLength="41.8" lengthAdjust="spacingAndGlyphs">902.281 USD</text>
<text transform="translate(806.84 883.6) scale(0.8 1) rotate(-45)" text-anchor="end" font-size="8.9" fill="#8a8a8a" textLength="41.8" lengthAdjust="spacingAndGlyphs">940.296 USD</text>
<text transform="translate(834.69 883.6) scale(0.8 1) rotate(-45)" text-anchor="end" font-size="8.9" fill="#8a8a8a" textLength="41.8" lengthAdjust="spacingAndGlyphs">978.311 USD</text>
<text transform="translate(862.54 883.6) scale(0.8 1) rotate(-45)" text-anchor="end" font-size="8.9" fill="#8a8a8a" textLength="48.4" lengthAdjust="spacingAndGlyphs">1.016.326 USD</text>
<text transform="translate(890.38 883.6) scale(0.8 1) rotate(-45)" text-anchor="end" font-size="8.9" fill="#8a8a8a" textLength="48.4" lengthAdjust="spacingAndGlyphs">1.054.340 USD</text>
<text transform="translate(918.23 883.6) scale(0.8 1) rotate(-45)" text-anchor="end" font-size="8.9" fill="#8a8a8a" textLength="48.4" lengthAdjust="spacingAndGlyphs">1.092.355 USD</text>
<text transform="translate(946.08 883.6) scale(0.8 1) rotate(-45)" text-anchor="end" font-size="8.9" fill="#8a8a8a" textLength="48.4" lengthAdjust="spacingAndGlyphs">1.130.370 USD</text>
<line x1="1037.4" y1="862.92" x2="1872" y2="862.92" stroke="#282828" stroke-width="1" stroke-dasharray="1.5 3"/>
<line x1="1037.4" y1="816.75" x2="1872" y2="816.75" stroke="#282828" stroke-width="1" stroke-dasharray="1.5 3"/>
<line x1="1037.4" y1="770.58" x2="1872" y2="770.58" stroke="#282828" stroke-width="1" stroke-dasharray="1.5 3"/>
<line x1="1037.4" y1="724.4" x2="1872" y2="724.4" stroke="#282828" stroke-width="1" stroke-dasharray="1.5 3"/>
<line x1="1043.25" y1="724.4" x2="1043.25" y2="909.1" stroke="#282828" stroke-width="0.9" stroke-dasharray="1.5 3"/>
<line x1="1053.27" y1="724.4" x2="1053.27" y2="909.1" stroke="#282828" stroke-width="0.9" stroke-dasharray="1.5 3"/>
<line x1="1064.97" y1="724.4" x2="1064.97" y2="909.1" stroke="#282828" stroke-width="0.9" stroke-dasharray="1.5 3"/>
<line x1="1075" y1="724.4" x2="1075" y2="909.1" stroke="#282828" stroke-width="0.9" stroke-dasharray="1.5 3"/>
<line x1="1085.02" y1="724.4" x2="1085.02" y2="909.1" stroke="#282828" stroke-width="0.9" stroke-dasharray="1.5 3"/>
<line x1="1095.05" y1="724.4" x2="1095.05" y2="909.1" stroke="#282828" stroke-width="0.9" stroke-dasharray="1.5 3"/>
<line x1="1105.08" y1="724.4" x2="1105.08" y2="909.1" stroke="#282828" stroke-width="0.9" stroke-dasharray="1.5 3"/>
<line x1="1115.1" y1="724.4" x2="1115.1" y2="909.1" stroke="#282828" stroke-width="0.9" stroke-dasharray="1.5 3"/>
<line x1="1128.47" y1="724.4" x2="1128.47" y2="909.1" stroke="#282828" stroke-width="0.9" stroke-dasharray="1.5 3"/>
<line x1="1142.09" y1="724.4" x2="1142.09" y2="909.1" stroke="#282828" stroke-width="0.9" stroke-dasharray="1.5 3"/>
<line x1="1155.71" y1="724.4" x2="1155.71" y2="909.1" stroke="#282828" stroke-width="0.9" stroke-dasharray="1.5 3"/>
<line x1="1169.33" y1="724.4" x2="1169.33" y2="909.1" stroke="#282828" stroke-width="0.9" stroke-dasharray="1.5 3"/>
<line x1="1182.94" y1="724.4" x2="1182.94" y2="909.1" stroke="#282828" stroke-width="0.9" stroke-dasharray="1.5 3"/>
<line x1="1196.56" y1="724.4" x2="1196.56" y2="909.1" stroke="#282828" stroke-width="0.9" stroke-dasharray="1.5 3"/>
<line x1="1210.18" y1="724.4" x2="1210.18" y2="909.1" stroke="#282828" stroke-width="0.9" stroke-dasharray="1.5 3"/>
<line x1="1223.8" y1="724.4" x2="1223.8" y2="909.1" stroke="#282828" stroke-width="0.9" stroke-dasharray="1.5 3"/>
<line x1="1237.42" y1="724.4" x2="1237.42" y2="909.1" stroke="#282828" stroke-width="0.9" stroke-dasharray="1.5 3"/>
<line x1="1251.04" y1="724.4" x2="1251.04" y2="909.1" stroke="#282828" stroke-width="0.9" stroke-dasharray="1.5 3"/>
<line x1="1264.66" y1="724.4" x2="1264.66" y2="909.1" stroke="#282828" stroke-width="0.9" stroke-dasharray="1.5 3"/>
<line x1="1278.27" y1="724.4" x2="1278.27" y2="909.1" stroke="#282828" stroke-width="0.9" stroke-dasharray="1.5 3"/>
<line x1="1291.89" y1="724.4" x2="1291.89" y2="909.1" stroke="#282828" stroke-width="0.9" stroke-dasharray="1.5 3"/>
<line x1="1305.51" y1="724.4" x2="1305.51" y2="909.1" stroke="#282828" stroke-width="0.9" stroke-dasharray="1.5 3"/>
<line x1="1319.13" y1="724.4" x2="1319.13" y2="909.1" stroke="#282828" stroke-width="0.9" stroke-dasharray="1.5 3"/>
<line x1="1332.75" y1="724.4" x2="1332.75" y2="909.1" stroke="#282828" stroke-width="0.9" stroke-dasharray="1.5 3"/>
<line x1="1346.37" y1="724.4" x2="1346.37" y2="909.1" stroke="#282828" stroke-width="0.9" stroke-dasharray="1.5 3"/>
<line x1="1359.99" y1="724.4" x2="1359.99" y2="909.1" stroke="#282828" stroke-width="0.9" stroke-dasharray="1.5 3"/>
<line x1="1373.61" y1="724.4" x2="1373.61" y2="909.1" stroke="#282828" stroke-width="0.9" stroke-dasharray="1.5 3"/>
<line x1="1387.22" y1="724.4" x2="1387.22" y2="909.1" stroke="#282828" stroke-width="0.9" stroke-dasharray="1.5 3"/>
<line x1="1400.84" y1="724.4" x2="1400.84" y2="909.1" stroke="#282828" stroke-width="0.9" stroke-dasharray="1.5 3"/>
<line x1="1414.46" y1="724.4" x2="1414.46" y2="909.1" stroke="#282828" stroke-width="0.9" stroke-dasharray="1.5 3"/>
<line x1="1428.08" y1="724.4" x2="1428.08" y2="909.1" stroke="#282828" stroke-width="0.9" stroke-dasharray="1.5 3"/>
<line x1="1441.7" y1="724.4" x2="1441.7" y2="909.1" stroke="#282828" stroke-width="0.9" stroke-dasharray="1.5 3"/>
<line x1="1455.32" y1="724.4" x2="1455.32" y2="909.1" stroke="#282828" stroke-width="0.9" stroke-dasharray="1.5 3"/>
<line x1="1468.94" y1="724.4" x2="1468.94" y2="909.1" stroke="#282828" stroke-width="0.9" stroke-dasharray="1.5 3"/>
<line x1="1482.55" y1="724.4" x2="1482.55" y2="909.1" stroke="#282828" stroke-width="0.9" stroke-dasharray="1.5 3"/>
<line x1="1496.17" y1="724.4" x2="1496.17" y2="909.1" stroke="#282828" stroke-width="0.9" stroke-dasharray="1.5 3"/>
<line x1="1509.79" y1="724.4" x2="1509.79" y2="909.1" stroke="#282828" stroke-width="0.9" stroke-dasharray="1.5 3"/>
<line x1="1523.41" y1="724.4" x2="1523.41" y2="909.1" stroke="#282828" stroke-width="0.9" stroke-dasharray="1.5 3"/>
<line x1="1537.03" y1="724.4" x2="1537.03" y2="909.1" stroke="#282828" stroke-width="0.9" stroke-dasharray="1.5 3"/>
<line x1="1550.65" y1="724.4" x2="1550.65" y2="909.1" stroke="#282828" stroke-width="0.9" stroke-dasharray="1.5 3"/>
<line x1="1564.27" y1="724.4" x2="1564.27" y2="909.1" stroke="#282828" stroke-width="0.9" stroke-dasharray="1.5 3"/>
<line x1="1577.88" y1="724.4" x2="1577.88" y2="909.1" stroke="#282828" stroke-width="0.9" stroke-dasharray="1.5 3"/>
<line x1="1591.5" y1="724.4" x2="1591.5" y2="909.1" stroke="#282828" stroke-width="0.9" stroke-dasharray="1.5 3"/>
<line x1="1605.12" y1="724.4" x2="1605.12" y2="909.1" stroke="#282828" stroke-width="0.9" stroke-dasharray="1.5 3"/>
<line x1="1618.74" y1="724.4" x2="1618.74" y2="909.1" stroke="#282828" stroke-width="0.9" stroke-dasharray="1.5 3"/>
<line x1="1632.36" y1="724.4" x2="1632.36" y2="909.1" stroke="#282828" stroke-width="0.9" stroke-dasharray="1.5 3"/>
<line x1="1645.98" y1="724.4" x2="1645.98" y2="909.1" stroke="#282828" stroke-width="0.9" stroke-dasharray="1.5 3"/>
<line x1="1659.6" y1="724.4" x2="1659.6" y2="909.1" stroke="#282828" stroke-width="0.9" stroke-dasharray="1.5 3"/>
<line x1="1673.22" y1="724.4" x2="1673.22" y2="909.1" stroke="#282828" stroke-width="0.9" stroke-dasharray="1.5 3"/>
<line x1="1686.83" y1="724.4" x2="1686.83" y2="909.1" stroke="#282828" stroke-width="0.9" stroke-dasharray="1.5 3"/>
<line x1="1700.45" y1="724.4" x2="1700.45" y2="909.1" stroke="#282828" stroke-width="0.9" stroke-dasharray="1.5 3"/>
<line x1="1714.07" y1="724.4" x2="1714.07" y2="909.1" stroke="#282828" stroke-width="0.9" stroke-dasharray="1.5 3"/>
<line x1="1727.69" y1="724.4" x2="1727.69" y2="909.1" stroke="#282828" stroke-width="0.9" stroke-dasharray="1.5 3"/>
<line x1="1741.31" y1="724.4" x2="1741.31" y2="909.1" stroke="#282828" stroke-width="0.9" stroke-dasharray="1.5 3"/>
<line x1="1754.93" y1="724.4" x2="1754.93" y2="909.1" stroke="#282828" stroke-width="0.9" stroke-dasharray="1.5 3"/>
<line x1="1768.55" y1="724.4" x2="1768.55" y2="909.1" stroke="#282828" stroke-width="0.9" stroke-dasharray="1.5 3"/>
<line x1="1782.16" y1="724.4" x2="1782.16" y2="909.1" stroke="#282828" stroke-width="0.9" stroke-dasharray="1.5 3"/>
<line x1="1795.78" y1="724.4" x2="1795.78" y2="909.1" stroke="#282828" stroke-width="0.9" stroke-dasharray="1.5 3"/>
<line x1="1809.4" y1="724.4" x2="1809.4" y2="909.1" stroke="#282828" stroke-width="0.9" stroke-dasharray="1.5 3"/>
<line x1="1823.02" y1="724.4" x2="1823.02" y2="909.1" stroke="#282828" stroke-width="0.9" stroke-dasharray="1.5 3"/>
<line x1="1836.64" y1="724.4" x2="1836.64" y2="909.1" stroke="#282828" stroke-width="0.9" stroke-dasharray="1.5 3"/>
<line x1="1850.26" y1="724.4" x2="1850.26" y2="909.1" stroke="#282828" stroke-width="0.9" stroke-dasharray="1.5 3"/>
<line x1="1863.88" y1="724.4" x2="1863.88" y2="909.1" stroke="#282828" stroke-width="0.9" stroke-dasharray="1.5 3"/>
<line x1="1872" y1="724.4" x2="1872" y2="909.1" stroke="#282828" stroke-width="0.9" stroke-dasharray="1.5 3"/>
<defs><linearGradient id="g75" x1="0" y1="0" x2="0" y2="1"><stop offset="0" stop-color="#2b4c86"/><stop offset="1" stop-color="#1f2b48"/></linearGradient></defs>
<path d="M1037.4 909.1 L1037.4 905.15 L1039.39 905.13 L1041.37 905.06 L1043.36 905.06 L1045.35 905 L1047.34 904.98 L1049.32 904.96 L1051.31 904.9 L1053.3 904.89 L1055.28 904.83 L1057.27 904.81 L1059.26 904.78 L1061.25 904.72 L1063.23 904.66 L1065.22 904.66 L1067.21 904.62 L1069.19 904.55 L1071.18 904.49 L1073.17 904.48 L1075.16 904.45 L1077.14 904.37 L1079.13 904.4 L1081.12 904.3 L1083.1 904.3 L1085.09 904.27 L1087.08 904.23 L1089.07 904.17 L1091.05 904.1 L1093.04 904.1 L1095.03 904.03 L1097.01 903.98 L1099 903.95 L1100.99 903.9 L1102.98 903.89 L1104.96 903.85 L1106.95 903.79 L1108.94 903.71 L1110.92 903.68 L1112.91 903.64 L1114.9 903.58 L1116.89 903.54 L1118.87 903.5 L1120.86 903.42 L1122.85 903.38 L1124.83 903.36 L1126.82 903.29 L1128.81 903.24 L1130.8 903.16 L1132.78 903.12 L1134.77 903.11 L1136.76 903 L1138.74 903.02 L1140.73 902.94 L1142.72 902.86 L1144.71 902.86 L1146.69 902.78 L1148.68 902.77 L1150.67 902.65 L1152.65 902.59 L1154.64 902.55 L1156.63 902.47 L1158.62 902.46 L1160.6 902.37 L1162.59 902.32 L1164.58 902.27 L1166.56 902.22 L1168.55 902.12 L1170.54 902.05 L1172.53 902.04 L1174.51 901.96 L1176.5 901.96 L1178.49 901.84 L1180.47 901.78 L1182.46 901.68 L1184.45 901.64 L1186.44 901.63 L1188.42 901.55 L1190.41 901.46 L1192.4 901.46 L1194.38 901.35 L1196.37 901.32 L1198.36 901.26 L1200.35 901.2 L1202.33 901.05 L1204.32 901.05 L1206.31 900.97 L1208.29 900.88 L1210.28 900.76 L1212.27 900.78 L1214.26 900.66 L1216.24 900.58 L1218.23 900.47 L1220.22 900.4 L1222.2 900.32 L1224.19 900.32 L1226.18 900.23 L1228.17 900.16 L1230.15 900.01 L1232.14 899.93 L1234.13 899.95 L1236.11 899.87 L1238.1 899.79 L1240.09 899.71 L1242.08 899.59 L1244.06 899.5 L1246.05 899.46 L1248.04 899.41 L1250.02 899.27 L1252.01 899.2 L1254 899.08 L1255.99 898.94 L1257.97 898.89 L1259.96 898.83 L1261.95 898.73 L1263.93 898.63 L1265.92 898.64 L1267.91 898.42 L1269.9 898.35 L1271.88 898.24 L1273.87 898.16 L1275.86 898.13 L1277.84 898.03 L1279.83 897.99 L1281.82 897.81 L1283.81 897.8 L1285.79 897.71 L1287.78 897.58 L1289.77 897.49 L1291.75 897.36 L1293.74 897.31 L1295.73 897.22 L1297.72 897.09 L1299.7 897 L1301.69 896.85 L1303.68 896.81 L1305.66 896.55 L1307.65 896.49 L1309.64 896.47 L1311.63 896.34 L1313.61 896.21 L1315.6 896.1 L1317.59 896.03 L1319.57 895.78 L1321.56 895.64 L1323.55 895.63 L1325.54 895.51 L1327.52 895.47 L1329.51 895.35 L1331.5 895.19 L1333.48 895.09 L1335.47 894.85 L1337.46 894.87 L1339.45 894.77 L1341.43 894.46 L1343.42 894.42 L1345.41 894.38 L1347.39 894.17 L1349.38 894.15 L1351.37 893.91 L1353.36 893.68 L1355.34 893.58 L1357.33 893.48 L1359.32 893.45 L1361.3 893.29 L1363.29 893.2 L1365.28 892.93 L1367.27 892.84 L1369.25 892.65 L1371.24 892.61 L1373.23 892.5 L1375.21 892.21 L1377.2 892.03 L1379.19 891.91 L1381.18 891.78 L1383.16 891.63 L1385.15 891.5 L1387.14 891.48 L1389.12 891.25 L1391.11 891.14 L1393.1 891.07 L1395.09 890.92 L1397.07 890.7 L1399.06 890.55 L1401.05 890.27 L1403.03 890.04 L1405.02 890.01 L1407.01 889.72 L1409 889.54 L1410.98 889.38 L1412.97 889.38 L1414.96 889.25 L1416.94 889.08 L1418.93 888.92 L1420.92 888.74 L1422.91 888.44 L1424.89 888.19 L1426.88 888.03 L1428.87 887.95 L1430.85 887.72 L1432.84 887.49 L1434.83 887.53 L1436.82 887.17 L1438.8 886.9 L1440.79 886.75 L1442.78 886.57 L1444.76 886.47 L1446.75 886.37 L1448.74 885.98 L1450.73 885.93 L1452.71 885.57 L1454.7 885.32 L1456.69 885.31 L1458.67 885.1 L1460.66 884.71 L1462.65 884.58 L1464.64 884.57 L1466.62 884.37 L1468.61 884.15 L1470.6 883.67 L1472.58 883.48 L1474.57 883.51 L1476.56 883.04 L1478.55 882.76 L1480.53 882.65 L1482.52 882.54 L1484.51 882.24 L1486.49 882.17 L1488.48 881.99 L1490.47 881.38 L1492.46 881.27 L1494.44 881.08 L1496.43 880.68 L1498.42 880.64 L1500.4 880.22 L1502.39 879.99 L1504.38 880 L1506.37 879.73 L1508.35 879.46 L1510.34 879.23 L1512.33 878.83 L1514.31 878.71 L1516.3 878.38 L1518.29 878.25 L1520.28 877.64 L1522.26 877.62 L1524.25 877.3 L1526.24 876.97 L1528.22 876.55 L1530.21 876.5 L1532.2 875.99 L1534.19 875.9 L1536.17 875.6 L1538.16 875.32 L1540.15 875.28 L1542.13 874.78 L1544.12 874.62 L1546.11 874.41 L1548.1 873.72 L1550.08 873.73 L1552.07 873.27 L1554.06 872.84 L1556.04 872.62 L1558.03 872.43 L1560.02 872.01 L1562.01 871.67 L1563.99 871.23 L1565.98 871.28 L1567.97 870.7 L1569.95 870.55 L1571.94 870.2 L1573.93 869.59 L1575.92 869.41 L1577.9 869.04 L1579.89 868.58 L1581.88 868.14 L1583.86 868.07 L1585.85 867.62 L1587.84 867.33 L1589.83 866.97 L1591.81 866.5 L1593.8 866.28 L1595.79 865.87 L1597.77 865.53 L1599.76 864.87 L1601.75 864.64 L1603.74 864.15 L1605.72 863.72 L1607.71 863.78 L1609.7 863.2 L1611.68 862.55 L1613.67 862.22 L1615.66 862.29 L1617.65 861.91 L1619.63 861.28 L1621.62 861.13 L1623.61 860.6 L1625.59 860.31 L1627.58 859.47 L1629.57 858.96 L1631.56 858.45 L1633.54 858.56 L1635.53 857.72 L1637.52 857.32 L1639.5 857.26 L1641.49 856.26 L1643.48 855.75 L1645.47 855.86 L1647.45 854.84 L1649.44 854.81 L1651.43 854.28 L1653.41 853.41 L1655.4 853.06 L1657.39 853.12 L1659.38 852.43 L1661.36 851.87 L1663.35 851.53 L1665.34 851.16 L1667.32 850.56 L1669.31 849.72 L1671.3 849.81 L1673.29 848.84 L1675.27 848.43 L1677.26 848.28 L1679.25 847.48 L1681.23 846.7 L1683.22 846.26 L1685.21 846.13 L1687.2 844.75 L1689.18 844.39 L1691.17 843.66 L1693.16 843.92 L1695.14 843.21 L1697.13 842.86 L1699.12 841.58 L1701.11 841.5 L1703.09 841.06 L1705.08 840.19 L1707.07 839.12 L1709.05 838.61 L1711.04 838.57 L1713.03 838.08 L1715.02 836.69 L1717 836.43 L1718.99 835.67 L1720.98 835.69 L1722.96 835.1 L1724.95 833.79 L1726.94 833.43 L1728.93 833.17 L1730.91 831.57 L1732.9 831.24 L1734.89 830.39 L1736.87 830.53 L1738.86 828.98 L1740.85 829.2 L1742.84 827.59 L1744.82 827.38 L1746.81 826.81 L1748.8 825.86 L1750.78 824.7 L1752.77 824.77 L1754.76 824.22 L1756.75 823.01 L1758.73 822.63 L1760.72 822.05 L1762.71 821.24 L1764.69 820.63 L1766.68 819.68 L1768.67 818.78 L1770.66 818.02 L1772.64 816.64 L1774.63 816.47 L1776.62 815.4 L1778.6 815.03 L1780.59 814 L1782.58 813.64 L1784.57 812.5 L1786.55 812.01 L1788.54 810.17 L1790.53 809.58 L1792.51 809.25 L1794.5 807.98 L1796.49 806.45 L1798.48 806.79 L1800.46 804.86 L1802.45 804.55 L1804.44 803.56 L1806.42 802.14 L1808.41 801.91 L1810.4 800.81 L1812.39 799.61 L1814.37 798.21 L1816.36 798.28 L1818.35 796.55 L1820.33 795.79 L1822.32 794.93 L1824.31 794.34 L1826.3 793.45 L1828.28 792.96 L1830.27 791.84 L1832.26 790.94 L1834.24 788.78 L1836.23 788.59 L1838.22 787.72 L1840.21 786.82 L1842.19 784.44 L1844.18 783.32 L1846.17 782.61 L1848.15 782.23 L1850.14 781.22 L1852.13 780.03 L1854.12 778.62 L1856.1 778.08 L1858.09 776.41 L1860.08 775.62 L1862.06 773.14 L1864.05 771.95 L1866.04 771.62 L1868.03 771.04 L1870.01 768.42 L1872 768.54 L1872 909.1 Z" fill="#172528"/>
<path d="M1037.4 909.1 L1037.4 905.23 L1039.39 905.21 L1041.37 905.16 L1043.36 905.13 L1045.35 905.1 L1047.34 905.08 L1049.32 905.03 L1051.31 905.02 L1053.3 904.98 L1055.28 904.95 L1057.27 904.9 L1059.26 904.89 L1061.25 904.85 L1063.23 904.81 L1065.22 904.78 L1067.21 904.73 L1069.19 904.7 L1071.18 904.65 L1073.17 904.62 L1075.16 904.58 L1077.14 904.54 L1079.13 904.52 L1081.12 904.49 L1083.1 904.42 L1085.09 904.43 L1087.08 904.36 L1089.07 904.33 L1091.05 904.32 L1093.04 904.24 L1095.03 904.2 L1097.01 904.17 L1099 904.13 L1100.99 904.09 L1102.98 904.08 L1104.96 904.02 L1106.95 903.98 L1108.94 903.92 L1110.92 903.89 L1112.91 903.84 L1114.9 903.81 L1116.89 903.76 L1118.87 903.72 L1120.86 903.68 L1122.85 903.66 L1124.83 903.63 L1126.82 903.58 L1128.81 903.53 L1130.8 903.5 L1132.78 903.41 L1134.77 903.38 L1136.76 903.33 L1138.74 903.28 L1140.73 903.24 L1142.72 903.2 L1144.71 903.18 L1146.69 903.09 L1148.68 903.04 L1150.67 903.01 L1152.65 902.96 L1154.64 902.9 L1156.63 902.89 L1158.62 902.8 L1160.6 902.78 L1162.59 902.74 L1164.58 902.68 L1166.56 902.6 L1168.55 902.58 L1170.54 902.49 L1172.53 902.42 L1174.51 902.4 L1176.5 902.36 L1178.49 902.3 L1180.47 902.23 L1182.46 902.17 L1184.45 902.13 L1186.44 902.07 L1188.42 902.05 L1190.41 901.99 L1192.4 901.93 L1194.38 901.84 L1196.37 901.81 L1198.36 901.73 L1200.35 901.71 L1202.33 901.65 L1204.32 901.58 L1206.31 901.49 L1208.29 901.43 L1210.28 901.37 L1212.27 901.33 L1214.26 901.25 L1216.24 901.2 L1218.23 901.13 L1220.22 901.1 L1222.2 900.97 L1224.19 900.96 L1226.18 900.84 L1228.17 900.77 L1230.15 900.78 L1232.14 900.68 L1234.13 900.58 L1236.11 900.5 L1238.1 900.48 L1240.09 900.43 L1242.08 900.36 L1244.06 900.23 L1246.05 900.22 L1248.04 900.12 L1250.02 900.09 L1252.01 899.98 L1254 899.87 L1255.99 899.87 L1257.97 899.74 L1259.96 899.69 L1261.95 899.58 L1263.93 899.52 L1265.92 899.49 L1267.91 899.35 L1269.9 899.31 L1271.88 899.28 L1273.87 899.21 L1275.86 899.08 L1277.84 899 L1279.83 898.94 L1281.82 898.87 L1283.81 898.77 L1285.79 898.69 L1287.78 898.55 L1289.77 898.56 L1291.75 898.4 L1293.74 898.3 L1295.73 898.29 L1297.72 898.12 L1299.7 898.06 L1301.69 897.95 L1303.68 897.93 L1305.66 897.83 L1307.65 897.74 L1309.64 897.58 L1311.63 897.53 L1313.61 897.47 L1315.6 897.37 L1317.59 897.29 L1319.57 897.23 L1321.56 897.13 L1323.55 896.94 L1325.54 896.91 L1327.52 896.73 L1329.51 896.72 L1331.5 896.62 L1333.48 896.49 L1335.47 896.43 L1337.46 896.31 L1339.45 896.13 L1341.43 896.04 L1343.42 895.94 L1345.41 895.86 L1347.39 895.72 L1349.38 895.61 L1351.37 895.56 L1353.36 895.43 L1355.34 895.41 L1357.33 895.21 L1359.32 895.13 L1361.3 894.98 L1363.29 894.88 L1365.28 894.82 L1367.27 894.74 L1369.25 894.5 L1371.24 894.5 L1373.23 894.34 L1375.21 894.24 L1377.2 894.13 L1379.19 893.94 L1381.18 893.79 L1383.16 893.77 L1385.15 893.59 L1387.14 893.52 L1389.12 893.36 L1391.11 893.26 L1393.1 893.17 L1395.09 893.04 L1397.07 892.91 L1399.06 892.67 L1401.05 892.6 L1403.03 892.52 L1405.02 892.27 L1407.01 892.12 L1409 892.08 L1410.98 892 L1412.97 891.85 L1414.96 891.74 L1416.94 891.55 L1418.93 891.46 L1420.92 891.29 L1422.91 891.15 L1424.89 890.95 L1426.88 890.75 L1428.87 890.63 L1430.85 890.54 L1432.84 890.39 L1434.83 890.22 L1436.82 890.1 L1438.8 889.96 L1440.79 889.86 L1442.78 889.67 L1444.76 889.38 L1446.75 889.39 L1448.74 889.15 L1450.73 888.97 L1452.71 888.76 L1454.7 888.73 L1456.69 888.56 L1458.67 888.4 L1460.66 888.21 L1462.65 888.03 L1464.64 887.76 L1466.62 887.61 L1468.61 887.43 L1470.6 887.45 L1472.58 887.27 L1474.57 886.95 L1476.56 886.73 L1478.55 886.65 L1480.53 886.45 L1482.52 886.4 L1484.51 886.13 L1486.49 885.82 L1488.48 885.66 L1490.47 885.47 L1492.46 885.25 L1494.44 885.24 L1496.43 885.08 L1498.42 884.88 L1500.4 884.6 L1502.39 884.36 L1504.38 884.1 L1506.37 883.96 L1508.35 883.78 L1510.34 883.55 L1512.33 883.42 L1514.31 883.19 L1516.3 883.12 L1518.29 882.72 L1520.28 882.66 L1522.26 882.26 L1524.25 882.12 L1526.24 882 L1528.22 881.84 L1530.21 881.58 L1532.2 881.26 L1534.19 881.02 L1536.17 880.96 L1538.16 880.75 L1540.15 880.4 L1542.13 880.15 L1544.12 879.98 L1546.11 879.8 L1548.1 879.45 L1550.08 879.39 L1552.07 879.07 L1554.06 878.78 L1556.04 878.39 L1558.03 878.24 L1560.02 877.92 L1562.01 877.8 L1563.99 877.63 L1565.98 877.38 L1567.97 876.9 L1569.95 876.72 L1571.94 876.6 L1573.93 876.43 L1575.92 876.01 L1577.9 875.69 L1579.89 875.51 L1581.88 875.3 L1583.86 874.89 L1585.85 874.53 L1587.84 874.5 L1589.83 874.29 L1591.81 873.91 L1593.8 873.6 L1595.79 873.23 L1597.77 873.12 L1599.76 872.61 L1601.75 872.34 L1603.74 872.14 L1605.72 871.96 L1607.71 871.37 L1609.7 871.32 L1611.68 870.83 L1613.67 870.75 L1615.66 870.45 L1617.65 869.93 L1619.63 869.81 L1621.62 869.23 L1623.61 869.1 L1625.59 868.91 L1627.58 868.57 L1629.57 868.17 L1631.56 867.74 L1633.54 867.3 L1635.53 867.3 L1637.52 866.87 L1639.5 866.61 L1641.49 865.94 L1643.48 865.96 L1645.47 865.66 L1647.45 865.31 L1649.44 864.81 L1651.43 864.24 L1653.41 863.89 L1655.4 863.6 L1657.39 863.11 L1659.38 862.78 L1661.36 862.69 L1663.35 862.39 L1665.34 861.66 L1667.32 861.38 L1669.31 861.34 L1671.3 860.66 L1673.29 860.41 L1675.27 860.03 L1677.26 859.66 L1679.25 859.35 L1681.23 859.04 L1683.22 858.5 L1685.21 858.06 L1687.2 857.34 L1689.18 857.36 L1691.17 856.51 L1693.16 856.49 L1695.14 856 L1697.13 855.33 L1699.12 854.9 L1701.11 854.68 L1703.09 854.46 L1705.08 853.79 L1707.07 853.41 L1709.05 852.66 L1711.04 852.62 L1713.03 852.08 L1715.02 851.32 L1717 851.36 L1718.99 850.68 L1720.98 849.98 L1722.96 849.54 L1724.95 849.5 L1726.94 849.03 L1728.93 848.53 L1730.91 847.53 L1732.9 847.45 L1734.89 846.65 L1736.87 846.06 L1738.86 845.92 L1740.85 845.46 L1742.84 844.51 L1744.82 844.22 L1746.81 843.94 L1748.8 843.12 L1750.78 842.86 L1752.77 842.36 L1754.76 842.02 L1756.75 840.97 L1758.73 840.32 L1760.72 839.97 L1762.71 839.21 L1764.69 839.3 L1766.68 838.59 L1768.67 837.86 L1770.66 836.95 L1772.64 836.38 L1774.63 836.22 L1776.62 835.74 L1778.6 835.02 L1780.59 834.39 L1782.58 833.47 L1784.57 833.43 L1786.55 832.36 L1788.54 831.8 L1790.53 831.12 L1792.51 830.54 L1794.5 830.04 L1796.49 829.64 L1798.48 829.01 L1800.46 828.34 L1802.45 827.36 L1804.44 827.29 L1806.42 826.54 L1808.41 825.42 L1810.4 825.18 L1812.39 824.67 L1814.37 824.03 L1816.36 822.9 L1818.35 822.42 L1820.33 821.16 L1822.32 820.54 L1824.31 819.75 L1826.3 819.69 L1828.28 819.14 L1830.27 818.41 L1832.26 817.32 L1834.24 816.4 L1836.23 815.91 L1838.22 815.37 L1840.21 814.45 L1842.19 813.51 L1844.18 812.69 L1846.17 811.86 L1848.15 810.99 L1850.14 810.39 L1852.13 810.15 L1854.12 808.64 L1856.1 808.39 L1858.09 807.32 L1860.08 806.71 L1862.06 805.52 L1864.05 805.26 L1866.04 804.38 L1868.03 803.55 L1870.01 802.81 L1872 801.18 L1872 909.1 Z" fill="url(#g75)" fill-opacity="0.95"/>
<path d="M1037.4 909.1 L1037.4 905.5 C1200 903 1400 897.5 1540 896.8 Q1556 897 1556 902 L1556 909.1 Z" fill="#26406c" fill-opacity="0.8"/>
<polyline points="1037.4,905.95 1039.39,905.93 1041.37,905.9 1043.36,905.88 1045.35,905.85 1047.34,905.83 1049.32,905.81 1051.31,905.78 1053.3,905.76 1055.28,905.73 1057.27,905.7 1059.26,905.68 1061.25,905.65 1063.23,905.63 1065.22,905.6 1067.21,905.58 1069.19,905.55 1071.18,905.52 1073.17,905.5 1075.16,905.47 1077.14,905.44 1079.13,905.41 1081.12,905.39 1083.1,905.36 1085.09,905.33 1087.08,905.3 1089.07,905.27 1091.05,905.24 1093.04,905.21 1095.03,905.19 1097.01,905.16 1099,905.13 1100.99,905.1 1102.98,905.07 1104.96,905.04 1106.95,905.01 1108.94,904.97 1110.92,904.94 1112.91,904.91 1114.9,904.88 1116.89,904.85 1118.87,904.82 1120.86,904.79 1122.85,904.75 1124.83,904.72 1126.82,904.69 1128.81,904.65 1130.8,904.62 1132.78,904.59 1134.77,904.55 1136.76,904.52 1138.74,904.48 1140.73,904.45 1142.72,904.41 1144.71,904.38 1146.69,904.34 1148.68,904.31 1150.67,904.27 1152.65,904.24 1154.64,904.2 1156.63,904.16 1158.62,904.13 1160.6,904.09 1162.59,904.05 1164.58,904.01 1166.56,903.97 1168.55,903.94 1170.54,903.9 1172.53,903.86 1174.51,903.82 1176.5,903.78 1178.49,903.74 1180.47,903.7 1182.46,903.66 1184.45,903.62 1186.44,903.58 1188.42,903.53 1190.41,903.49 1192.4,903.45 1194.38,903.41 1196.37,903.36 1198.36,903.32 1200.35,903.28 1202.33,903.23 1204.32,903.19 1206.31,903.15 1208.29,903.1 1210.28,903.06 1212.27,903.01 1214.26,902.96 1216.24,902.92 1218.23,902.87 1220.22,902.82 1222.2,902.78 1224.19,902.73 1226.18,902.68 1228.17,902.63 1230.15,902.59 1232.14,902.54 1234.13,902.49 1236.11,902.44 1238.1,902.39 1240.09,902.34 1242.08,902.29 1244.06,902.23 1246.05,902.18 1248.04,902.13 1250.02,902.08 1252.01,902.03 1254,901.97 1255.99,901.92 1257.97,901.86 1259.96,901.81 1261.95,901.76 1263.93,901.7 1265.92,901.64 1267.91,901.59 1269.9,901.53 1271.88,901.48 1273.87,901.42 1275.86,901.36 1277.84,901.3 1279.83,901.24 1281.82,901.18 1283.81,901.12 1285.79,901.06 1287.78,901 1289.77,900.94 1291.75,900.88 1293.74,900.82 1295.73,900.76 1297.72,900.7 1299.7,900.63 1301.69,900.57 1303.68,900.5 1305.66,900.44 1307.65,900.37 1309.64,900.31 1311.63,900.24 1313.61,900.18 1315.6,900.11 1317.59,900.04 1319.57,899.97 1321.56,899.9 1323.55,899.84 1325.54,899.77 1327.52,899.7 1329.51,899.62 1331.5,899.55 1333.48,899.48 1335.47,899.41 1337.46,899.34 1339.45,899.26 1341.43,899.19 1343.42,899.11 1345.41,899.04 1347.39,898.96 1349.38,898.89 1351.37,898.81 1353.36,898.73 1355.34,898.66 1357.33,898.58 1359.32,898.5 1361.3,898.42 1363.29,898.34 1365.28,898.26 1367.27,898.18 1369.25,898.09 1371.24,898.01 1373.23,897.93 1375.21,897.84 1377.2,897.76 1379.19,897.67 1381.18,897.59 1383.16,897.5 1385.15,897.41 1387.14,897.33 1389.12,897.24 1391.11,897.15 1393.1,897.06 1395.09,896.97 1397.07,896.88 1399.06,896.78 1401.05,896.69 1403.03,896.6 1405.02,896.5 1407.01,896.41 1409,896.31 1410.98,896.22 1412.97,896.12 1414.96,896.02 1416.94,895.93 1418.93,895.83 1420.92,895.73 1422.91,895.63 1424.89,895.52 1426.88,895.42 1428.87,895.32 1430.85,895.22 1432.84,895.11 1434.83,895.01 1436.82,894.9 1438.8,894.79 1440.79,894.69 1442.78,894.58 1444.76,894.47 1446.75,894.36 1448.74,894.25 1450.73,894.14 1452.71,894.02 1454.7,893.91 1456.69,893.8 1458.67,893.68 1460.66,893.56 1462.65,893.45 1464.64,893.33 1466.62,893.21 1468.61,893.09 1470.6,892.97 1472.58,892.85 1474.57,892.73 1476.56,892.61 1478.55,892.48 1480.53,892.36 1482.52,892.23 1484.51,892.1 1486.49,891.98 1488.48,891.85 1490.47,891.72 1492.46,891.59 1494.44,891.45 1496.43,891.32 1498.42,891.19 1500.4,891.05 1502.39,890.92 1504.38,890.78 1506.37,890.64 1508.35,890.5 1510.34,890.37 1512.33,890.22 1514.31,890.08 1516.3,889.94 1518.29,889.8 1520.28,889.65 1522.26,889.5 1524.25,889.36 1526.24,889.21 1528.22,889.06 1530.21,888.91 1532.2,888.76 1534.19,888.6 1536.17,888.45 1538.16,888.29 1540.15,888.14 1542.13,887.98 1544.12,887.82 1546.11,887.66 1548.1,887.5 1550.08,887.34 1552.07,887.17 1554.06,887.01 1556.04,886.84 1558.03,886.67 1560.02,886.51 1562.01,886.34 1563.99,886.17 1565.98,885.99 1567.97,885.82 1569.95,885.64 1571.94,885.47 1573.93,885.29 1575.92,885.11 1577.9,884.93 1579.89,884.75 1581.88,884.57 1583.86,884.38 1585.85,884.2 1587.84,884.01 1589.83,883.82 1591.81,883.63 1593.8,883.44 1595.79,883.24 1597.77,883.05 1599.76,882.85 1601.75,882.66 1603.74,882.46 1605.72,882.26 1607.71,882.06 1609.7,881.85 1611.68,881.65 1613.67,881.44 1615.66,881.23 1617.65,881.02 1619.63,880.81 1621.62,880.6 1623.61,880.39 1625.59,880.17 1627.58,879.95 1629.57,879.73 1631.56,879.51 1633.54,879.29 1635.53,879.07 1637.52,878.84 1639.5,878.61 1641.49,878.38 1643.48,878.15 1645.47,877.92 1647.45,877.68 1649.44,877.45 1651.43,877.21 1653.41,876.97 1655.4,876.73 1657.39,876.49 1659.38,876.24 1661.36,875.99 1663.35,875.74 1665.34,875.49 1667.32,875.24 1669.31,874.99 1671.3,874.73 1673.29,874.47 1675.27,874.21 1677.26,873.95 1679.25,873.68 1681.23,873.42 1683.22,873.15 1685.21,872.88 1687.2,872.61 1689.18,872.33 1691.17,872.06 1693.16,871.78 1695.14,871.5 1697.13,871.21 1699.12,870.93 1701.11,870.64 1703.09,870.35 1705.08,870.06 1707.07,869.77 1709.05,869.47 1711.04,869.17 1713.03,868.87 1715.02,868.57 1717,868.27 1718.99,867.96 1720.98,867.65 1722.96,867.34 1724.95,867.02 1726.94,866.71 1728.93,866.39 1730.91,866.07 1732.9,865.74 1734.89,865.42 1736.87,865.09 1738.86,864.76 1740.85,864.43 1742.84,864.09 1744.82,863.75 1746.81,863.41 1748.8,863.07 1750.78,862.72 1752.77,862.37 1754.76,862.02 1756.75,861.67 1758.73,861.31 1760.72,860.95 1762.71,860.59 1764.69,860.22 1766.68,859.86 1768.67,859.49 1770.66,859.11 1772.64,858.74 1774.63,858.36 1776.62,857.98 1778.6,857.59 1780.59,857.2 1782.58,856.81 1784.57,856.42 1786.55,856.02 1788.54,855.63 1790.53,855.22 1792.51,854.82 1794.5,854.41 1796.49,854 1798.48,853.58 1800.46,853.17 1802.45,852.75 1804.44,852.32 1806.42,851.9 1808.41,851.47 1810.4,851.03 1812.39,850.6 1814.37,850.16 1816.36,849.71 1818.35,849.27 1820.33,848.82 1822.32,848.36 1824.31,847.91 1826.3,847.45 1828.28,846.98 1830.27,846.52 1832.26,846.04 1834.24,845.57 1836.23,845.09 1838.22,844.61 1840.21,844.13 1842.19,843.64 1844.18,843.15 1846.17,842.65 1848.15,842.15 1850.14,841.65 1852.13,841.14 1854.12,840.63 1856.1,840.11 1858.09,839.59 1860.08,839.07 1862.06,838.55 1864.05,838.01 1866.04,837.48 1868.03,836.94 1870.01,836.4 1872,835.85" fill="none" stroke="#3b82f6" stroke-width="2.1" stroke-linejoin="round"/>
<line x1="1038.4" y1="906.8" x2="1872" y2="906.8" stroke="#f04a3a" stroke-width="1.6" stroke-dasharray="2.8 2.8"/>
<line x1="1037.4" y1="724.4" x2="1037.4" y2="909.1" stroke="#57504a" stroke-width="1.2"/>
<line x1="1037.4" y1="909.1" x2="1872" y2="909.1" stroke="#555" stroke-width="1.2"/>
<line x1="1033.4" y1="909.1" x2="1037.4" y2="909.1" stroke="#57504a" stroke-width="1"/>
<line x1="1033.4" y1="862.92" x2="1037.4" y2="862.92" stroke="#57504a" stroke-width="1"/>
<line x1="1033.4" y1="816.75" x2="1037.4" y2="816.75" stroke="#57504a" stroke-width="1"/>
<line x1="1033.4" y1="770.58" x2="1037.4" y2="770.58" stroke="#57504a" stroke-width="1"/>
<line x1="1033.4" y1="724.4" x2="1037.4" y2="724.4" stroke="#57504a" stroke-width="1"/>
<line x1="1038.24" y1="909.1" x2="1038.24" y2="913.1" stroke="#5a5a5a" stroke-width="1" />
<line x1="1048.26" y1="909.1" x2="1048.26" y2="913.1" stroke="#5a5a5a" stroke-width="1" />
<line x1="1060.79" y1="909.1" x2="1060.79" y2="913.1" stroke="#5a5a5a" stroke-width="1" />
<line x1="1073.33" y1="909.1" x2="1073.33" y2="913.1" stroke="#5a5a5a" stroke-width="1" />
<line x1="1085.86" y1="909.1" x2="1085.86" y2="913.1" stroke="#5a5a5a" stroke-width="1" />
<line x1="1098.39" y1="909.1" x2="1098.39" y2="913.1" stroke="#5a5a5a" stroke-width="1" />
<line x1="1110.92" y1="909.1" x2="1110.92" y2="913.1" stroke="#5a5a5a" stroke-width="1" />
<line x1="1125.96" y1="909.1" x2="1125.96" y2="913.1" stroke="#5a5a5a" stroke-width="1" />
<line x1="1143.51" y1="909.1" x2="1143.51" y2="913.1" stroke="#5a5a5a" stroke-width="1" />
<line x1="1161.05" y1="909.1" x2="1161.05" y2="913.1" stroke="#5a5a5a" stroke-width="1" />
<line x1="1178.6" y1="909.1" x2="1178.6" y2="913.1" stroke="#5a5a5a" stroke-width="1" />
<line x1="1196.14" y1="909.1" x2="1196.14" y2="913.1" stroke="#5a5a5a" stroke-width="1" />
<line x1="1213.69" y1="909.1" x2="1213.69" y2="913.1" stroke="#5a5a5a" stroke-width="1" />
<line x1="1231.24" y1="909.1" x2="1231.24" y2="913.1" stroke="#5a5a5a" stroke-width="1" />
<line x1="1248.78" y1="909.1" x2="1248.78" y2="913.1" stroke="#5a5a5a" stroke-width="1" />
<line x1="1266.33" y1="909.1" x2="1266.33" y2="913.1" stroke="#5a5a5a" stroke-width="1" />
<line x1="1283.87" y1="909.1" x2="1283.87" y2="913.1" stroke="#5a5a5a" stroke-width="1" />
<line x1="1301.42" y1="909.1" x2="1301.42" y2="913.1" stroke="#5a5a5a" stroke-width="1" />
<line x1="1318.96" y1="909.1" x2="1318.96" y2="913.1" stroke="#5a5a5a" stroke-width="1" />
<line x1="1336.51" y1="909.1" x2="1336.51" y2="913.1" stroke="#5a5a5a" stroke-width="1" />
<line x1="1354.05" y1="909.1" x2="1354.05" y2="913.1" stroke="#5a5a5a" stroke-width="1" />
<line x1="1371.6" y1="909.1" x2="1371.6" y2="913.1" stroke="#5a5a5a" stroke-width="1" />
<line x1="1389.15" y1="909.1" x2="1389.15" y2="913.1" stroke="#5a5a5a" stroke-width="1" />
<line x1="1406.69" y1="909.1" x2="1406.69" y2="913.1" stroke="#5a5a5a" stroke-width="1" />
<line x1="1424.24" y1="909.1" x2="1424.24" y2="913.1" stroke="#5a5a5a" stroke-width="1" />
<line x1="1441.78" y1="909.1" x2="1441.78" y2="913.1" stroke="#5a5a5a" stroke-width="1" />
<line x1="1459.33" y1="909.1" x2="1459.33" y2="913.1" stroke="#5a5a5a" stroke-width="1" />
<line x1="1476.87" y1="909.1" x2="1476.87" y2="913.1" stroke="#5a5a5a" stroke-width="1" />
<line x1="1494.42" y1="909.1" x2="1494.42" y2="913.1" stroke="#5a5a5a" stroke-width="1" />
<line x1="1511.96" y1="909.1" x2="1511.96" y2="913.1" stroke="#5a5a5a" stroke-width="1" />
<line x1="1529.51" y1="909.1" x2="1529.51" y2="913.1" stroke="#5a5a5a" stroke-width="1" />
<line x1="1547.06" y1="909.1" x2="1547.06" y2="913.1" stroke="#5a5a5a" stroke-width="1" />
<line x1="1564.6" y1="909.1" x2="1564.6" y2="913.1" stroke="#5a5a5a" stroke-width="1" />
<line x1="1582.15" y1="909.1" x2="1582.15" y2="913.1" stroke="#5a5a5a" stroke-width="1" />
<line x1="1599.69" y1="909.1" x2="1599.69" y2="913.1" stroke="#5a5a5a" stroke-width="1" />
<line x1="1617.24" y1="909.1" x2="1617.24" y2="913.1" stroke="#5a5a5a" stroke-width="1" />
<line x1="1634.78" y1="909.1" x2="1634.78" y2="913.1" stroke="#5a5a5a" stroke-width="1" />
<line x1="1652.33" y1="909.1" x2="1652.33" y2="913.1" stroke="#5a5a5a" stroke-width="1" />
<line x1="1669.87" y1="909.1" x2="1669.87" y2="913.1" stroke="#5a5a5a" stroke-width="1" />
<line x1="1687.42" y1="909.1" x2="1687.42" y2="913.1" stroke="#5a5a5a" stroke-width="1" />
<line x1="1704.96" y1="909.1" x2="1704.96" y2="913.1" stroke="#5a5a5a" stroke-width="1" />
<line x1="1722.51" y1="909.1" x2="1722.51" y2="913.1" stroke="#5a5a5a" stroke-width="1" />
<line x1="1740.06" y1="909.1" x2="1740.06" y2="913.1" stroke="#5a5a5a" stroke-width="1" />
<line x1="1757.6" y1="909.1" x2="1757.6" y2="913.1" stroke="#5a5a5a" stroke-width="1" />
<line x1="1775.15" y1="909.1" x2="1775.15" y2="913.1" stroke="#5a5a5a" stroke-width="1" />
<line x1="1792.69" y1="909.1" x2="1792.69" y2="913.1" stroke="#5a5a5a" stroke-width="1" />
<line x1="1810.24" y1="909.1" x2="1810.24" y2="913.1" stroke="#5a5a5a" stroke-width="1" />
<line x1="1827.78" y1="909.1" x2="1827.78" y2="913.1" stroke="#5a5a5a" stroke-width="1" />
<line x1="1845.33" y1="909.1" x2="1845.33" y2="913.1" stroke="#5a5a5a" stroke-width="1" />
<line x1="1872.06" y1="909.1" x2="1872.06" y2="913.1" stroke="#5a5a5a" stroke-width="1" />
<text transform="translate(1010.6 788) scale(0.8 1) rotate(-90)" text-anchor="middle" font-size="10.5" fill="#8a8a8a" letter-spacing="0.8" textLength="55" lengthAdjust="spacingAndGlyphs">Capitale ($)</text>
</svg>
</body></html>
